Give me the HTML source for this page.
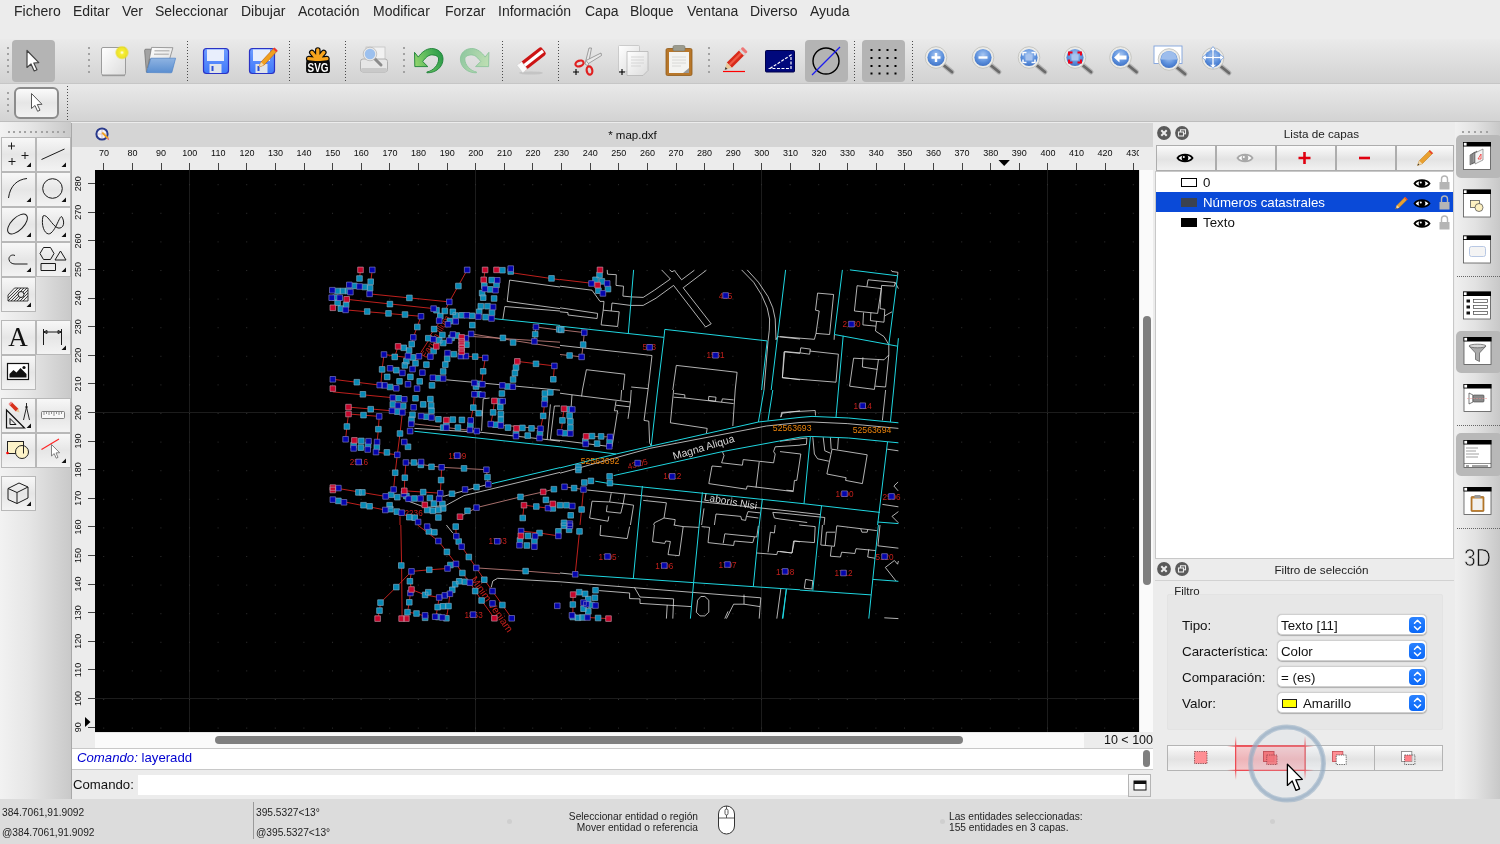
<!DOCTYPE html>
<html lang="es">
<head>
<meta charset="utf-8">
<title>* map.dxf</title>
<style>
html,body{margin:0;padding:0;}
html{background:#ececec;}
body{width:1500px;height:844px;overflow:hidden;position:relative;background:#ececec;will-change:transform;font-family:"Liberation Sans",sans-serif;color:#262626;}
.abs{position:absolute;}
#menubar{left:0;top:0;width:1500px;height:39px;background:#ececec;}
#menubar span{position:absolute;top:3px;font-size:14px;line-height:17px;color:#262626;white-space:nowrap;}
#tb1{left:0;top:39px;width:1500px;height:45px;background:linear-gradient(#eaeaea,#d2d2d2);border-bottom:1px solid #c6c6c6;box-sizing:border-box;}
#tb2{left:0;top:84px;width:1500px;height:38px;background:linear-gradient(#e9e9e9,#d3d3d3);border-bottom:1px solid #bdbdbd;box-sizing:border-box;}
.vsep{position:absolute;width:1px;background:repeating-linear-gradient(#4a4a4a 0,#4a4a4a 1px,transparent 1px,transparent 3px);}
.grip{position:absolute;width:2px;background:repeating-linear-gradient(#a2a2a2 0,#a2a2a2 2px,transparent 2px,transparent 6px);}
.hgrip{position:absolute;height:2px;background:repeating-linear-gradient(90deg,#a2a2a2 0,#a2a2a2 2px,transparent 2px,transparent 5.500px);}
.sel{position:absolute;background:#b4b4b4;border-radius:4px;}
#lefttb{left:0;top:122px;width:71px;height:677px;background:linear-gradient(90deg,#f2f2f2 0%,#e6e6e6 40%,#c9c9c9 100%);}
.tbtn{position:absolute;width:33px;height:33px;box-sizing:border-box;border:1px solid #b9b9b9;background:linear-gradient(#fafafa,#e2e2e2 55%,#f4f4f4);}
.tbtn svg{position:absolute;left:0;top:0;}
#tabbar{left:72px;top:123px;width:1081px;height:24px;background:#d5d5d5;}
#hruler{left:95px;top:147px;width:1044px;height:23px;background:#ececec;overflow:hidden;}
#vruler{left:72px;top:170px;width:23px;height:562px;background:#ececec;overflow:hidden;}
#canvas{left:95px;top:170px;width:1044px;height:562px;background:#000;overflow:hidden;}
#status{left:0;top:799px;width:1500px;height:45px;background:#dcdcdc;}
#status div{position:absolute;font-size:10.200px;line-height:11px;white-space:nowrap;color:#1e1e1e;}
#rightdock{left:1155px;top:123px;width:299px;height:676px;background:#ececec;}
#righttb{left:1455px;top:122px;width:45px;height:677px;background:linear-gradient(90deg,#f0f0f0 0%,#e2e2e2 45%,#c8c8c8 100%);}
</style>
</head>
<body>
<div id="menubar" class="abs">
<span style="left:14px">Fichero</span><span style="left:73px">Editar</span><span style="left:122px">Ver</span><span style="left:155px">Seleccionar</span><span style="left:241px">Dibujar</span><span style="left:298px">Acotación</span><span style="left:373px">Modificar</span><span style="left:445px">Forzar</span><span style="left:498px">Información</span><span style="left:585px">Capa</span><span style="left:630px">Bloque</span><span style="left:687px">Ventana</span><span style="left:750px">Diverso</span><span style="left:810px">Ayuda</span>
</div>
<div id="tb1" class="abs">
<div class="sel" style="left:12px;top:1px;width:43px;height:42px"></div>
<div class="sel" style="left:805px;top:1px;width:43px;height:42px"></div>
<div class="sel" style="left:862px;top:1px;width:43px;height:42px"></div>
<div class="grip" style="left:7px;top:8px;height:26px"></div>
<div class="grip" style="left:88px;top:8px;height:26px"></div>
<div class="grip" style="left:403px;top:8px;height:26px"></div>
<div class="grip" style="left:708px;top:8px;height:26px"></div>
<div class="vsep" style="left:187px;top:2px;height:40px"></div>
<div class="vsep" style="left:289px;top:2px;height:40px"></div>
<div class="vsep" style="left:345px;top:2px;height:40px"></div>
<div class="vsep" style="left:502px;top:2px;height:40px"></div>
<div class="vsep" style="left:558px;top:2px;height:40px"></div>
<div class="vsep" style="left:854px;top:2px;height:40px"></div>
<div class="vsep" style="left:912px;top:2px;height:40px"></div>
<svg class="abs" style="left:0;top:0" width="1500" height="45" viewBox="0 39 1500 45">
<defs>
<linearGradient id="gpaper" x1="0" y1="0" x2="1" y2="1"><stop offset="0" stop-color="#fff"/><stop offset="1" stop-color="#dcdcdc"/></linearGradient>
<radialGradient id="gglow"><stop offset="0" stop-color="#fff"/><stop offset="0.300" stop-color="#f6ee30"/><stop offset="0.750" stop-color="#ebe022" stop-opacity="0.950"/><stop offset="1" stop-color="#e6da20" stop-opacity="0"/></radialGradient>
<linearGradient id="gblue" x1="0" y1="0" x2="0" y2="1"><stop offset="0" stop-color="#8fb4e2"/><stop offset="1" stop-color="#5a8ed0"/></linearGradient>
<radialGradient id="gmag" cx="0.5" cy="0.35" r="0.7"><stop offset="0" stop-color="#a9c8f2"/><stop offset="0.6" stop-color="#5b8fdc"/><stop offset="1" stop-color="#3a6cc0"/></radialGradient>
<linearGradient id="gfloppy" x1="0" y1="0" x2="0" y2="1"><stop offset="0" stop-color="#6f9dff"/><stop offset="1" stop-color="#3f78fa"/></linearGradient>
<g id="mag"><line x1="7" y1="7" x2="16" y2="14.500" stroke="#b4b4b4" stroke-width="5" stroke-linecap="round"/><line x1="8" y1="8" x2="16" y2="14.500" stroke="#6a6a6a" stroke-width="2.800" stroke-linecap="round"/><circle cx="0" cy="0" r="10.800" fill="#ebebe8" stroke="#bdbdb8" stroke-width="0.800"/><circle cx="0" cy="0" r="8.600" fill="url(#gmag)"/></g>
</defs>
<!-- arrow -->
<path d="M27 50.500 L27 67.500 L31 64 L34.200 71 L37 69.800 L33.800 63 L38.800 62.600 Z" fill="#fff" stroke="#444" stroke-width="1.200" stroke-linejoin="round"/>
<!-- new -->
<rect x="101.500" y="47.500" width="24" height="27.500" rx="1.500" fill="url(#gpaper)" stroke="#9c9c9c"/><path d="M102 75.700 h23" stroke="#8a8a8a" stroke-width="0.800"/>
<circle cx="122" cy="52.600" r="7.200" fill="url(#gglow)"/>
<!-- open -->
<path d="M144.600 50.500 q0 -1.300 1.300 -1.300 h5.600 l-3.300 23 h-1.800z" fill="#a2a2a2" stroke="#6a6a6a" stroke-width="0.700"/>
<path d="M151.600 47.400 L172.900 47.700 L169.600 59 L149.600 59 L147.600 68 Z" fill="url(#gpaper)" stroke="#7a7a7a" stroke-width="0.700"/>
<path d="M154.500 50.800 h15 M154 54.300 h14.800" stroke="#bdbdbd" stroke-width="1.500"/>
<path d="M150.900 58.200 H175.600 L171.900 72.300 Q171.700 72.800 171 72.800 L147 72.500 Q146.400 72.400 146.700 71.800 Z" fill="url(#gblue)" stroke="#4f84c8" stroke-width="0.700"/>
<!-- save -->
<g id="floppy"><rect x="203.5" y="48.500" width="25" height="25" rx="3" fill="url(#gfloppy)" stroke="#2a32c4" stroke-width="1.200"/><rect x="207" y="49.5" width="17" height="11.500" fill="#e8eefc"/><rect x="209.500" y="64" width="12" height="9" fill="#dfe4ea"/><rect x="211.500" y="66" width="2" height="5" fill="#2a4fd8"/></g>
<!-- save as -->
<g transform="translate(46,0)"><rect x="203.5" y="48.500" width="25" height="25" rx="3" fill="url(#gfloppy)" stroke="#2a32c4" stroke-width="1.200"/><rect x="207" y="49.5" width="17" height="11.500" fill="#e8eefc"/><rect x="209.500" y="64" width="12" height="9" fill="#dfe4ea"/><rect x="211.500" y="66" width="2" height="5" fill="#2a4fd8"/></g>
<path d="M259 67 l2 -5 l13 -14 l3.200 3 l-13 14z" fill="#f0a020" stroke="#c46a10" stroke-width="0.7"/><path d="M259 67 l2 -5 l3 3z" fill="#f3d9a8"/><path d="M273 49 l1.500 -1.600 l3.200 3 l-1.500 1.600z" fill="#e33"/>
<!-- svg -->
<path d="M317.8 59.6 L317.8 50.0 M317.8 59.6 L323.8 52.4 M317.8 59.6 L311.8 52.4 M317.8 59.6 L326.9 58.6 M317.8 59.6 L308.7 58.6" stroke="#0a0a0a" stroke-width="5.600" stroke-linecap="round" fill="none"/>
<rect x="306.300" y="59" width="23.400" height="14" rx="2.500" fill="#0a0a0a"/>
<path d="M317.8 59.6 L317.8 50.0 M317.8 59.6 L323.8 52.4 M317.8 59.6 L311.8 52.4 M317.8 59.6 L326.9 58.6 M317.8 59.6 L308.7 58.6" stroke="#f7a41d" stroke-width="3.300" stroke-linecap="round" fill="none"/>
<rect x="306.300" y="61.300" width="23.400" height="11.700" rx="2.500" fill="#0a0a0a"/>
<text x="318" y="71.700" font-size="12.300" font-weight="bold" fill="#fff" text-anchor="middle" font-family="Liberation Sans, sans-serif" textLength="21" lengthAdjust="spacingAndGlyphs">SVG</text>
<!-- print preview -->
<rect x="366" y="47" width="19" height="14" fill="#f1f1f1" stroke="#c4c4c4" stroke-width="0.8"/>
<rect x="360.500" y="59" width="27" height="13" rx="2.500" fill="#e6e6e6" stroke="#a9a9a9" stroke-width="0.9"/>
<rect x="361" y="68" width="26" height="4" rx="1.500" fill="#c9c9c9"/>
<line x1="374" y1="58" x2="381" y2="65" stroke="#8b8b8b" stroke-width="3" stroke-linecap="round"/>
<circle cx="370" cy="54" r="6" fill="#9cc0ee" stroke="#e8e8e8" stroke-width="1.600"/><circle cx="370" cy="54" r="6.800" fill="none" stroke="#a8a8a8" stroke-width="0.600"/>
<!-- undo -->
<linearGradient id="gundo" x1="414" y1="66" x2="443" y2="56" gradientUnits="userSpaceOnUse"><stop offset="0" stop-color="#9ad870"/><stop offset="0.500" stop-color="#5cba5c"/><stop offset="1" stop-color="#2a9a48"/></linearGradient>
<linearGradient id="gredo" x1="414" y1="66" x2="443" y2="56" gradientUnits="userSpaceOnUse"><stop offset="0" stop-color="#c0e0b4"/><stop offset="0.500" stop-color="#aad4aa"/><stop offset="1" stop-color="#90c8a0"/></linearGradient>
<path d="M414.500 52.300 L418.300 57.100 C421 53 426 48.500 431.600 48.500 C438 48.500 443 53 443 59 C443 67 436 73 427 72.800 L426.800 72 C433 71 438.600 65 438.600 59 C438.600 56 435 54.900 431.600 54.900 C428 54.900 425 58.500 422.700 61.500 L427.800 66.600 L414.800 66.600 Z" fill="url(#gundo)" stroke="#1b8036" stroke-width="0.900" stroke-linejoin="round"/>
<!-- redo -->
<g transform="translate(903.400,0) scale(-1,1)"><path d="M414.500 52.300 L418.300 57.100 C421 53 426 48.500 431.600 48.500 C438 48.500 443 53 443 59 C443 67 436 73 427 72.800 L426.800 72 C433 71 438.600 65 438.600 59 C438.600 56 435 54.900 431.600 54.900 C428 54.900 425 58.500 422.700 61.500 L427.800 66.600 L414.800 66.600 Z" fill="url(#gredo)" stroke="#8cc49c" stroke-width="0.900" stroke-linejoin="round"/></g>
<!-- eraser -->
<ellipse cx="531" cy="73" rx="12" ry="1.600" fill="#bcbcbc" opacity="0.7"/>
<g transform="translate(532,59.500) rotate(-38)"><rect x="-14" y="-4.800" width="29" height="9.600" rx="2.500" fill="#cc1414"/><rect x="-10" y="-1.600" width="24" height="3.200" fill="#fff"/><rect x="-15.500" y="-4.800" width="6" height="9.600" fill="#fafafa" stroke="#ccc" stroke-width="0.500"/></g>
<!-- scissors -->
<path d="M589 48 l2.500 0 l-3.500 18 l-3 -2z" fill="#e9e9e9" stroke="#8a8a8a" stroke-width="0.8"/>
<path d="M601 53 l0.500 2.500 l-13 8 l-2.500 -3z" fill="#e9e9e9" stroke="#8a8a8a" stroke-width="0.8"/>
<ellipse cx="579.500" cy="63.500" rx="4.200" ry="2.800" fill="none" stroke="#e02020" stroke-width="2.200" transform="rotate(-20 579.500 63.500)"/>
<ellipse cx="589.500" cy="70.500" rx="2.800" ry="4.200" fill="none" stroke="#e02020" stroke-width="2.200" transform="rotate(-10 589.500 70.500)"/>
<path d="M573 72 h6 M576 69 v6" stroke="#000" stroke-width="1.100"/>
<!-- copy -->
<rect x="618.500" y="45.500" width="21" height="26" rx="1" fill="url(#gpaper)" stroke="#c2c2c2" stroke-width="0.8"/>
<path d="M627 51.500 h21 v19 l-5 5 h-16z" fill="url(#gpaper)" stroke="#b5b5b5" stroke-width="0.8"/>
<path d="M631 57 h13 M631 60 h13 M631 63 h13 M631 66 h10" stroke="#cfcfcf" stroke-width="0.8"/>
<path d="M619 72 h6 M622 69 v6" stroke="#000" stroke-width="1.100"/>
<!-- paste -->
<rect x="666" y="48.500" width="26" height="27" rx="1.500" fill="#b8772a" stroke="#8f5a1a" stroke-width="0.8"/>
<rect x="669" y="52" width="20" height="21" fill="#f3f3f1"/>
<path d="M672 57 h14 M672 60 h14 M672 63 h14 M672 66 h9" stroke="#d0d0d0" stroke-width="0.8"/>
<path d="M689 68 v5 h-6z" fill="#9a9a9a"/>
<rect x="673" y="45.500" width="12" height="5.500" rx="1.500" fill="#9b9b8e" stroke="#77776c" stroke-width="0.600"/>
<!-- pencil underline -->
<line x1="723" y1="71.500" x2="745" y2="71.500" stroke="#f00" stroke-width="1.200"/>
<g transform="translate(735,59.500) rotate(-45)"><rect x="-8" y="-3.600" width="19" height="7.200" fill="#d82a1a"/><rect x="-8" y="-1.200" width="19" height="2.200" fill="#ef5a45"/><path d="M-8 -3.600 l-6.500 3.600 l6.500 3.600z" fill="#e8c99a"/><path d="M-12 -1.400 l-2.500 1.400 l2.500 1.400z" fill="#333"/><rect x="9" y="-3.600" width="2.500" height="7.200" fill="#d9d9d9"/><rect x="11.500" y="-3.600" width="3" height="7.200" rx="1.200" fill="#e77"/></g>
<!-- draft -->
<rect x="765.500" y="50.500" width="29" height="21.500" rx="1" fill="#00087c" stroke="#00004a"/>
<path d="M770 68.500 L791 55 V68.500 Z" fill="none" stroke="#fff" stroke-width="1.200" stroke-dasharray="3 1.500"/>
<!-- screen lw -->
<circle cx="826" cy="61" r="13" fill="none" stroke="#000" stroke-width="1.400"/>
<line x1="812" y1="75" x2="840" y2="47" stroke="#1d1df0" stroke-width="1.200"/>
<!-- grid -->
<g fill="#000"><rect x="870.5" y="49" width="2" height="2"/><rect x="878.5" y="49" width="2" height="2"/><rect x="886.5" y="49" width="2" height="2"/><rect x="894.5" y="49" width="2" height="2"/><rect x="870.5" y="57" width="2" height="2"/><rect x="878.5" y="57" width="2" height="2"/><rect x="886.5" y="57" width="2" height="2"/><rect x="894.5" y="57" width="2" height="2"/><rect x="870.5" y="65" width="2" height="2"/><rect x="878.5" y="65" width="2" height="2"/><rect x="886.5" y="65" width="2" height="2"/><rect x="894.5" y="65" width="2" height="2"/><rect x="870.5" y="72.5" width="2" height="2"/><rect x="878.5" y="72.5" width="2" height="2"/><rect x="886.5" y="72.5" width="2" height="2"/><rect x="894.5" y="72.5" width="2" height="2"/></g>
<use href="#mag" x="936" y="57.5"/><path d="M931.500 57.500 h9 M936 53 v9" stroke="#fff" stroke-width="2.400"/>
<use href="#mag" x="983" y="57.5"/><path d="M978.500 57.500 h9" stroke="#fff" stroke-width="2.400"/>
<use href="#mag" x="1029" y="57.5"/><rect x="1025.5" y="54.5" width="7" height="6" fill="#a9c4ee"/><path d="M1023 55.5 v-3 h3.500 M1031.5 52.5 h3.500 v3 M1035 59.5 v3 h-3.500 M1026.5 62.5 h-3.500 v-3" stroke="#fff" stroke-width="1.5" fill="none"/>
<use href="#mag" x="1075" y="57.5"/><rect x="1071.5" y="54.5" width="7" height="6" fill="#a9c4ee"/><path d="M1069 55.5 v-3 h3.500 M1077.5 52.5 h3.500 v3 M1081 59.5 v3 h-3.500 M1072.5 62.5 h-3.500 v-3" stroke="#f00018" stroke-width="1.9" fill="none"/>
<use href="#mag" x="1120.5" y="57.5"/><path d="M1114 57.500 l5.500 -5 v3 h7 v4 h-7 v3z" fill="#fff"/>
<rect x="1154" y="46" width="28" height="17.500" fill="#fff" stroke="#7fa2dc" stroke-width="0.900"/><use href="#mag" x="1169" y="59.5"/><path d="M1160.800 59.500 a8.200 8.200 0 0 1 16.400 0z" fill="#9dbdec"/>
<use href="#mag" x="1213" y="58.5"/><path d="M1213 46.500 l3 4 h-2 v6 h6 v-2 l4 3 l-4 3 v-2 h-6 v6 h2 l-3 4 l-3 -4 h2 v-6 h-6 v2 l-4 -3 l4 -3 v2 h6 v-6 h-2z" fill="#fff" stroke="#6c98dc" stroke-width="0.700"/>
</svg>
</div>
<div id="tb2" class="abs">
<div class="grip" style="left:7px;top:8px;height:20px"></div>
<div class="vsep" style="left:67px;top:2px;height:34px"></div>
<div class="abs" style="left:14px;top:3px;width:45px;height:32px;border:2px solid #8c8c8c;border-radius:6px;box-sizing:border-box;background:linear-gradient(#fbfbfb,#e6e6e6 50%,#f2f2f2)"></div>
<svg class="abs" style="left:14px;top:3px" width="43" height="31" viewBox="0 0 43 31"><path d="M17.500 6.500 L17.500 21.500 L21 18.500 L23.600 24.300 L26 23.200 L23.300 17.500 L28 17.300 Z" fill="#fff" stroke="#555" stroke-width="1" stroke-linejoin="round"/></svg>
</div>
<div id="lefttb" class="abs">
<div class="hgrip" style="left:7.500px;top:9px;width:57px"></div>
<svg class="abs" style="left:0;top:0" width="71" height="677" viewBox="0 122 71 677">
<defs>
<linearGradient id="gbtn" x1="0" y1="0" x2="0" y2="1"><stop offset="0" stop-color="#f8f8f8"/><stop offset="0.5" stop-color="#e6e6e6"/><stop offset="1" stop-color="#f3f3f3"/></linearGradient>
<g id="lb"><rect x="0.5" y="0.5" width="34" height="34" fill="url(#gbtn)" stroke="#b8b8b8"/></g>
<path id="tri" d="M0 0 l4.500 -4.500 v4.500z" fill="#111"/>
</defs>
<use href="#lb" x="1" y="137"/><use href="#lb" x="36" y="137"/>
<use href="#lb" x="1" y="172"/><use href="#lb" x="36" y="172"/>
<use href="#lb" x="1" y="207"/><use href="#lb" x="36" y="207"/>
<use href="#lb" x="1" y="242"/><use href="#lb" x="36" y="242"/>
<use href="#lb" x="1" y="277"/>
<use href="#lb" x="1" y="320"/><use href="#lb" x="36" y="320"/>
<use href="#lb" x="1" y="355"/>
<use href="#lb" x="1" y="398"/><use href="#lb" x="36" y="398"/>
<use href="#lb" x="1" y="433"/><use href="#lb" x="36" y="433"/>
<use href="#lb" x="1" y="476"/>
<!-- corner triangles -->
<use href="#tri" x="26.500" y="167"/><use href="#tri" x="61.500" y="167"/>
<use href="#tri" x="26.500" y="202"/><use href="#tri" x="61.500" y="202"/>
<use href="#tri" x="26.500" y="237"/><use href="#tri" x="61.500" y="237"/>
<use href="#tri" x="26.500" y="272"/><use href="#tri" x="61.500" y="272"/>
<use href="#tri" x="26.500" y="307"/>
<use href="#tri" x="61.500" y="350"/>
<use href="#tri" x="26.500" y="428"/>
<use href="#tri" x="61.500" y="463"/>
<use href="#tri" x="26.500" y="506"/>
<g fill="none" stroke="#1a1a1a" stroke-width="1">
<!-- points -->
<path d="M8 146 h7 M11.500 142.500 v7 M21.500 155.500 h7 M25 152 v7 M8.500 161.500 h7 M12 158 v7"/>
<!-- line -->
<path d="M41.500 159.500 L64.500 149"/>
<!-- arc -->
<path d="M8.500 198 C10 186 17 179.500 27 178.500"/>
<!-- circle -->
<circle cx="52.500" cy="188.500" r="9.800"/>
<!-- ellipse -->
<ellipse cx="17.500" cy="224" rx="12.500" ry="6.200" transform="rotate(-45 17.500 224)"/>
<!-- spline -->
<path d="M43 216 C40.500 227 46 237 51 233 C57 228 60 214 62 217 C65 222 64 229 58 228 C52 226 47 213 43 216"/>
<!-- polyline -->
<path d="M15 255.500 C11.500 254 8.500 256.500 9 259.500 C9.500 262.500 12 264 15 264 L27.500 264"/>
<!-- shapes -->
<path d="M40 253.500 l3.500 -6 h7 l3.500 6 l-3.500 6 h-7z M55 260 l5.500 -9 l5.500 9z M41 263.500 h14.500 v7 h-14.500z"/>
<!-- hatch -->
<path d="M8 295 l6.500 -7 h13.500 v13 h-20z M8 298 l10 -10 M8 301 l13 -13 M11 301 l13 -13 M14 301 l13 -13 M17 301 l11 -11 M20 301 l8 -8 M23 301 l5 -5" stroke-width="0.800"/>
<circle cx="21" cy="294.500" r="3" fill="#e8e8e8"/>
<!-- dimension -->
<path d="M43.500 329 v16 M61.500 329 v16 M43.500 332 h18 M43.500 332 l3.500 -1.500 v3z M61.500 332 l-3.500 -1.500 v3z"/>
<!-- 3d box -->
<path d="M8 488.500 l11 -5.500 l9 4 v11 l-11 5.500 l-9 -4z M8 488.500 l9 4 l11 -5.500 M17 492.500 v11"/>
</g>
<!-- A -->
<text x="18" y="346" font-size="27" text-anchor="middle" font-family="Liberation Serif, serif" fill="#111">A</text>
<!-- image icon -->
<rect x="7.500" y="363.500" width="21" height="16" fill="#fff" stroke="#111" stroke-width="1.200"/>
<path d="M9.500 377.500 v-3.500 l4 -4 l3 2.500 l4 -4.500 l6 6 v3.500z" fill="#111"/><circle cx="24" cy="367.500" r="1.600" fill="#111"/>
<!-- drafting tools -->
<path d="M6.500 410 v18 h18z" fill="none" stroke="#111" stroke-width="1.200"/><path d="M10 418.500 v6 h6z" fill="none" stroke="#111" stroke-width="1"/>
<g transform="translate(15,408) rotate(45)"><rect x="-6" y="-1.800" width="9" height="3.600" fill="#d8301c"/><path d="M3 -1.800 l3.500 1.800 l-3.500 1.800z" fill="#e8c99a"/><rect x="-7.500" y="-1.800" width="2" height="3.600" fill="#e88"/></g>
<path d="M26.500 403 v4 M26.500 407 l-3 13 M26.500 407 l3 13 M25 407 h3" fill="none" stroke="#111" stroke-width="0.900"/>
<!-- ruler -->
<rect x="41.500" y="411.500" width="23" height="7" rx="1" fill="#f8f8f8" stroke="#666" stroke-width="0.800"/>
<path d="M44 412 v3 M46.500 412 v2 M49 412 v3 M51.500 412 v2 M54 412 v4 M56.500 412 v2 M59 412 v3 M61.500 412 v2" stroke="#666" stroke-width="0.700"/>
<!-- block -->
<rect x="7.500" y="441.500" width="16" height="12" fill="#fdf3c8" stroke="#222" stroke-width="1"/>
<circle cx="22" cy="452" r="6.500" fill="#fdf3c8" stroke="#222" stroke-width="1"/>
<path d="M7.500 441.500 h16 v12" fill="none" stroke="#222" stroke-width="1"/>
<circle cx="7.500" cy="453" r="1.300" fill="#f00"/>
<!-- select line -->
<line x1="41.500" y1="449.500" x2="59" y2="439" stroke="#f22" stroke-width="1.100"/>
<path d="M51.500 444.500 v11.500 l2.700 -2.400 l2 4.600 l1.800 -0.800 l-2 -4.500 l3.600 -0.200z" fill="#fff" stroke="#666" stroke-width="0.800" stroke-linejoin="round"/>
</svg>
</div>
<div class="abs" id="lefsep" style="left:70.500px;top:123px;width:1.500px;height:676px;background:#a8a8a8"></div>
<div id="tabbar" class="abs"><div class="abs" style="left:20px;top:4.700px;width:1081px;text-align:center;font-size:11.500px;line-height:15px;color:#111">* map.dxf</div>
<svg class="abs" style="left:23px;top:3px" width="16" height="17" viewBox="0 0 16 17"><circle cx="7" cy="8" r="5.600" fill="#f4f4f8" stroke="#2a3a8c" stroke-width="2"/><path d="M3 8 h8 M7 4 v8" stroke="#c9a0a0" stroke-width="0.600"/><path d="M6.500 7 l5.500 6 l1.500 -1.500 l-5.500 -5.500z" fill="#f0a020"/><path d="M12 13 l2.200 1.200 l-0.800 -2.600z" fill="#e66"/></svg></div>
<div id="hruler" class="abs"><svg width="1044" height="23" viewBox="95 147 1044 23" font-family="Liberation Sans, sans-serif" font-size="9" fill="#0c0c0c">
<text x="103.9" y="155.800" text-anchor="middle">70</text>
<text x="132.5" y="155.800" text-anchor="middle">80</text>
<text x="161.1" y="155.800" text-anchor="middle">90</text>
<text x="189.7" y="155.800" text-anchor="middle">100</text>
<text x="218.3" y="155.800" text-anchor="middle">110</text>
<text x="246.9" y="155.800" text-anchor="middle">120</text>
<text x="275.5" y="155.800" text-anchor="middle">130</text>
<text x="304.1" y="155.800" text-anchor="middle">140</text>
<text x="332.7" y="155.800" text-anchor="middle">150</text>
<text x="361.3" y="155.800" text-anchor="middle">160</text>
<text x="389.9" y="155.800" text-anchor="middle">170</text>
<text x="418.5" y="155.800" text-anchor="middle">180</text>
<text x="447.2" y="155.800" text-anchor="middle">190</text>
<text x="475.8" y="155.800" text-anchor="middle">200</text>
<text x="504.4" y="155.800" text-anchor="middle">210</text>
<text x="533.0" y="155.800" text-anchor="middle">220</text>
<text x="561.6" y="155.800" text-anchor="middle">230</text>
<text x="590.2" y="155.800" text-anchor="middle">240</text>
<text x="618.8" y="155.800" text-anchor="middle">250</text>
<text x="647.4" y="155.800" text-anchor="middle">260</text>
<text x="676.0" y="155.800" text-anchor="middle">270</text>
<text x="704.6" y="155.800" text-anchor="middle">280</text>
<text x="733.2" y="155.800" text-anchor="middle">290</text>
<text x="761.8" y="155.800" text-anchor="middle">300</text>
<text x="790.4" y="155.800" text-anchor="middle">310</text>
<text x="819.0" y="155.800" text-anchor="middle">320</text>
<text x="847.6" y="155.800" text-anchor="middle">330</text>
<text x="876.2" y="155.800" text-anchor="middle">340</text>
<text x="904.8" y="155.800" text-anchor="middle">350</text>
<text x="933.5" y="155.800" text-anchor="middle">360</text>
<text x="962.1" y="155.800" text-anchor="middle">370</text>
<text x="990.7" y="155.800" text-anchor="middle">380</text>
<text x="1019.3" y="155.800" text-anchor="middle">390</text>
<text x="1047.9" y="155.800" text-anchor="middle">400</text>
<text x="1076.5" y="155.800" text-anchor="middle">410</text>
<text x="1105.1" y="155.800" text-anchor="middle">420</text>
<text x="1133.7" y="155.800" text-anchor="middle">430</text>
<path d="M103.5 163 v7 M132.5 163 v7 M161.5 163 v7 M189.5 163 v7 M218.5 163 v7 M246.5 163 v7 M275.5 163 v7 M304.5 163 v7 M332.5 163 v7 M361.5 163 v7 M389.5 163 v7 M418.5 163 v7 M447.5 163 v7 M475.5 163 v7 M504.5 163 v7 M532.5 163 v7 M561.5 163 v7 M590.5 163 v7 M618.5 163 v7 M647.5 163 v7 M676.5 163 v7 M704.5 163 v7 M733.5 163 v7 M761.5 163 v7 M790.5 163 v7 M819.5 163 v7 M847.5 163 v7 M876.5 163 v7 M904.5 163 v7 M933.5 163 v7 M962.5 163 v7 M990.5 163 v7 M1019.5 163 v7 M1047.5 163 v7 M1076.5 163 v7 M1105.5 163 v7 M1133.5 163 v7 " stroke="#444" stroke-width="1" fill="none"/>
<path d="M998.500 160 h11.400 l-5.700 6z" fill="#000"/>
</svg></div>
<div id="vruler" class="abs"><svg width="23" height="562" viewBox="72 170 23 562" font-family="Liberation Sans, sans-serif" font-size="9" fill="#0c0c0c">
<text transform="translate(81.400,727.2) rotate(-90)" text-anchor="middle">90</text>
<text transform="translate(81.400,698.6) rotate(-90)" text-anchor="middle">100</text>
<text transform="translate(81.400,670.0) rotate(-90)" text-anchor="middle">110</text>
<text transform="translate(81.400,641.3) rotate(-90)" text-anchor="middle">120</text>
<text transform="translate(81.400,612.7) rotate(-90)" text-anchor="middle">130</text>
<text transform="translate(81.400,584.1) rotate(-90)" text-anchor="middle">140</text>
<text transform="translate(81.400,555.5) rotate(-90)" text-anchor="middle">150</text>
<text transform="translate(81.400,526.9) rotate(-90)" text-anchor="middle">160</text>
<text transform="translate(81.400,498.3) rotate(-90)" text-anchor="middle">170</text>
<text transform="translate(81.400,469.7) rotate(-90)" text-anchor="middle">180</text>
<text transform="translate(81.400,441.1) rotate(-90)" text-anchor="middle">190</text>
<text transform="translate(81.400,412.5) rotate(-90)" text-anchor="middle">200</text>
<text transform="translate(81.400,383.9) rotate(-90)" text-anchor="middle">210</text>
<text transform="translate(81.400,355.3) rotate(-90)" text-anchor="middle">220</text>
<text transform="translate(81.400,326.7) rotate(-90)" text-anchor="middle">230</text>
<text transform="translate(81.400,298.1) rotate(-90)" text-anchor="middle">240</text>
<text transform="translate(81.400,269.5) rotate(-90)" text-anchor="middle">250</text>
<text transform="translate(81.400,240.9) rotate(-90)" text-anchor="middle">260</text>
<text transform="translate(81.400,212.3) rotate(-90)" text-anchor="middle">270</text>
<text transform="translate(81.400,183.7) rotate(-90)" text-anchor="middle">280</text>
<path d="M88 727.5 h7 M88 698.5 h7 M88 669.5 h7 M88 641.5 h7 M88 612.5 h7 M88 584.5 h7 M88 555.5 h7 M88 526.5 h7 M88 498.5 h7 M88 469.5 h7 M88 441.5 h7 M88 412.5 h7 M88 383.5 h7 M88 355.5 h7 M88 326.5 h7 M88 298.5 h7 M88 269.5 h7 M88 240.5 h7 M88 212.5 h7 M88 183.5 h7 " stroke="#444" stroke-width="1" fill="none"/>
<path d="M85 717 v10 l5.500 -5z" fill="#000"/>
</svg></div>
<div class="abs" style="left:1139px;top:170px;width:14px;height:562px;background:#fafafa;border-left:1px solid #e6e6e6;box-sizing:border-box"></div>
<div class="abs" style="left:1143px;top:316px;width:8px;height:269px;border-radius:4px;background:#7f7f7f"></div>
<div class="abs" style="left:72px;top:732px;width:1081px;height:16px;background:#fafafa;border-top:1px solid #e6e6e6;box-sizing:border-box"></div>
<div class="abs" style="left:72px;top:732px;width:23px;height:16px;background:#ececec"></div>
<div class="abs" style="left:215px;top:736px;width:748px;height:8px;border-radius:4px;background:#7f7f7f"></div>
<div class="abs" style="left:1084px;top:732px;width:69px;height:16px;background:#ececec;font-size:12.500px;line-height:17px;text-align:right;color:#111">10 &lt; 100</div>
<div class="abs" style="left:72px;top:748px;width:1081px;height:22px;background:#fff;border-top:1px solid #c8c8c8;border-bottom:1px solid #c8c8c8;box-sizing:border-box"></div>
<div class="abs" style="left:77px;top:750px;font-size:13.200px;line-height:16px;color:#0000d0;white-space:nowrap"><i>Comando:</i> layeradd</div>
<div class="abs" style="left:1143px;top:750px;width:7px;height:17px;border-radius:3.500px;background:#7f7f7f"></div>
<div class="abs" style="left:73px;top:777px;font-size:13.200px;line-height:16px;color:#111">Comando:</div>
<div class="abs" style="left:138px;top:775px;width:990px;height:20px;background:#fff"></div>
<div class="abs" style="left:1128px;top:774px;width:23px;height:23px;box-sizing:border-box;border:1px solid #b5b5b5;background:linear-gradient(#fafafa,#e6e6e6)"><svg width="21" height="21" viewBox="0 0 21 21" style="position:absolute;left:0;top:0"><rect x="5" y="6" width="12" height="9" fill="#fff" stroke="#111" stroke-width="1"/><rect x="5" y="6" width="12" height="3" fill="#111"/></svg></div>
<div id="canvas" class="abs"><svg width="1044" height="562" viewBox="95 170 1044 562" font-family="Liberation Sans, sans-serif">
<path d="M189.5 170 V732 M475.5 170 V732 M761.5 170 V732 M1047.5 170 V732 M95 698.5 H1139 M95 412.5 H1139 " stroke="#1c1c1c" stroke-width="1" fill="none"/>
<defs><pattern id="gd" x="189.00" y="413.00" width="28.6" height="28.6" patternUnits="userSpaceOnUse"><rect x="0" y="0" width="1" height="1" fill="#303030"/></pattern></defs>
<rect x="95" y="170" width="1044" height="562" fill="url(#gd)"/>
<path d="M509.6 280.1 L560.0 287.0 M509.6 280.1 L507.2 301.4 L560.0 308.6 M504.8 306.5 L560.0 311.0 M504.8 306.5 L502.9 319.0 M446.4 379.8 L560.0 390.2 M414.4 428.4 L481.6 432.4 L547.2 439.6 L560.0 441.2 M483.2 398.8 L481.6 430.8 M483.2 398.8 L489.6 398.0 M550.4 404.4 L547.2 439.6 M554.4 406.0 L550.4 439.6 L560.0 440.4 M560.0 406.0 L554.4 406.0 M406.4 500.4 L425.6 507.6 L446.4 505.2 L464.0 495.6 L560.0 472.4 M443.2 496.4 L488.0 484.4 M491.2 587.4 L492.8 581.0 L497.6 578.3 L560.0 581.8 M446.4 525.0 L452.8 533.0 M560.0 286.2 L592.0 290.2 L600.0 301.4 L604.0 301.4 L603.2 310.2 M607.2 269.9 L607.5 274.2 L616.3 274.7 L616.0 285.4 L623.5 286.2 L622.9 296.1 L631.2 296.9 L643.2 297.4 L654.4 290.2 L670.4 279.0 L661.6 269.9 M612.0 303.0 L630.4 305.4 L643.2 305.4 L656.0 298.2 L673.6 285.4 L705.6 327.0 L711.2 323.8 L683.2 287.8 L706.4 270.2 M669.6 269.9 L672.0 271.8 L674.4 270.5 L681.6 279.8 L694.4 270.2 M612.0 303.0 L611.2 311.0 M603.2 310.2 L619.2 311.8 L617.6 326.5 L601.1 324.9 L603.2 310.2 M560.0 307.8 L597.6 313.4 L597.1 318.5 L568.0 315.0 L568.0 312.6 L560.0 311.8 M741.6 269.9 L753.6 282.2 L761.6 295.0 L767.2 307.8 L769.6 319.0 L769.3 330.2 L768.0 341.4 L764.0 390.0 M747.2 269.9 L758.4 282.2 L768.0 296.6 L772.8 307.8 L775.2 319.0 L776.0 339.8 M776.0 339.8 L777.6 336.6 L800.0 339.0 M560.0 345.4 L652.0 355.5 L648.0 390.0 M586.4 369.7 L624.8 374.2 L623.2 390.0 M586.4 369.7 L582.4 390.0 M676.3 365.4 L737.1 372.3 L735.2 390.0 M676.3 365.4 L672.8 390.0 M631.2 387.0 L648.0 388.6 M800.0 353.4 L784.0 351.8 L782.4 377.4 L800.0 379.8 M560.0 393.2 L572.0 394.8 L571.2 406.0 M572.0 394.8 L630.4 402.0 M582.4 390.0 L581.6 396.4 M621.6 390.0 L620.8 400.4 M631.2 390.0 L630.4 402.0 L628.0 418.8 M616.0 401.2 L614.4 410.8 L617.6 410.8 L612.0 446.8 M616.0 405.2 L629.6 406.8 M560.0 440.4 L612.0 446.8 M648.0 390.0 L644.0 420.4 L648.8 421.2 L649.6 442.8 L651.2 446.0 M560.0 473.2 L649.6 448.4 L766.4 426.0 L800.0 422.5 M587.2 490.0 L780.0 510.0 M673.6 390.0 L670.4 422.8 L707.2 428.4 L706.4 433.2 M673.6 397.2 L684.8 398.0 L684.8 394.8 L674.4 393.5 M684.8 398.0 L733.6 403.6 M708.8 396.4 L716.0 397.2 L715.5 401.2 L708.5 400.4 L708.8 396.4 M721.6 402.0 L722.4 398.8 L733.6 399.9 M735.2 390.0 L732.8 426.0 M780.8 417.2 L782.4 413.2 L800.0 410.8 M722.4 451.6 L724.0 455.6 L721.6 462.8 L742.4 465.2 L743.2 459.6 L773.6 462.8 L775.2 454.0 L773.6 451.6 L775.2 446.8 L800.0 445.2 M721.6 466.8 L712.0 466.0 L708.8 483.6 L746.4 489.2 L747.2 486.0 L793.6 491.6 M759.2 462.0 L756.0 487.6 M611.2 493.2 L609.6 502.0 L592.0 501.2 L589.6 518.0 L608.0 521.2 L608.8 516.4 M624.8 494.0 L623.2 503.6 L609.6 502.0 M623.2 503.6 L620.8 513.2 L606.4 511.6 L607.2 505.2 M630.4 525.0 L633.6 505.2 L623.2 503.6 M643.2 500.4 L666.4 502.8 L664.0 518.0 L654.4 522.8 L653.6 525.0 M664.0 518.0 L675.2 519.6 L674.4 525.0 M704.0 508.4 L701.6 525.0 M716.0 514.0 L740.8 516.4 L741.6 519.6 L745.6 520.4 L746.4 516.4 L758.4 518.0 M716.0 514.0 L714.4 525.0 M748.0 511.6 L746.4 516.4 M748.0 511.6 L760.0 512.9 M772.8 512.4 L774.4 518.0 L780.0 519.0 M772.8 512.4 L780.0 512.9 M560.0 573.0 L572.8 574.3 M560.0 581.8 L760.8 597.8 L759.2 618.6 M599.2 590.6 L629.6 593.0 L629.6 598.6 L640.0 598.9 L640.0 603.4 L691.2 606.6 M634.4 587.4 L640.0 597.0 L673.6 598.9 L672.8 618.6 M667.2 605.0 L666.4 618.6 M744.0 594.6 L744.0 604.2 L760.0 606.6 M744.0 604.2 L733.6 604.2 L726.4 618.6 M728.0 611.4 L724.8 618.6 M780.8 589.0 L776.8 618.6 M600.8 525.0 L600.0 535.4 L627.2 538.6 L629.6 526.6 M654.4 525.0 L652.5 541.8 L664.8 543.4 L665.6 541.0 L670.4 541.5 L668.0 554.6 L679.2 555.7 L683.2 526.6 L673.6 525.0 M683.2 526.6 L699.2 527.4 M701.6 526.6 L709.6 527.4 L708.0 542.6 L733.6 545.5 L734.4 541.0 L752.8 542.6 L754.4 537.0 M724.8 533.8 L756.8 537.0 L758.4 525.8 M724.8 533.8 L723.2 543.4 M768.0 552.2 L770.4 532.2 L774.4 533.0 L775.2 525.0 M756.8 553.0 L776.8 554.6 L777.6 551.4 L792.0 553.0 L794.4 541.0 L800.0 541.8 M697.6 600.2 L700.8 596.5 L704.8 596.5 L708.8 600.2 L708.8 612.2 L704.8 615.9 L700.0 615.9 L696.3 612.2 L697.6 600.2 M817.6 293.1 L833.6 294.5 L829.6 334.5 L816.0 333.4 L819.2 311.0 L815.5 310.2 L817.6 293.1 M780.0 336.6 L814.4 339.3 L816.0 333.4 M834.4 334.5 L834.1 339.8 M866.9 286.7 L868.0 279.8 L895.2 282.5 L894.4 286.2 L881.6 285.4 L880.0 308.6 L884.8 309.4 L884.0 322.2 L870.4 320.6 L870.9 312.6 M857.1 285.7 L881.3 288.6 L877.6 313.4 L854.4 311.0 L857.1 285.7 M863.5 312.6 L862.9 324.9 L876.0 326.2 L876.5 321.4 M876.0 326.2 L875.5 331.0 L884.0 336.6 L888.8 344.6 L888.8 355.0 L884.0 359.8 M884.8 315.8 L892.0 311.8 M891.2 270.2 L892.0 271.5 L897.9 272.3 L897.6 275.8 M895.2 282.5 L898.4 288.6 M800.8 347.8 L810.4 349.1 L809.6 354.2 L800.0 352.9 L800.8 347.8 M784.8 351.5 L800.0 352.9 M809.6 351.0 L838.4 354.2 L836.0 382.2 L782.4 377.9 L784.8 351.5 M884.0 359.8 L853.6 358.2 L849.6 386.2 L874.4 389.4 L878.4 359.8 M862.9 357.4 L862.4 367.0 L877.3 369.4 M888.8 355.0 L885.6 387.0 L875.2 386.2 M885.6 390.0 L882.4 420.4 M800.0 422.5 L812.0 422.0 L847.2 423.6 L898.4 428.4 M780.8 417.2 L781.6 412.4 L815.2 410.5 L815.5 415.6 M780.0 441.2 L806.9 438.0 L806.4 444.4 L800.0 445.0 M780.0 451.6 L800.8 454.0 L796.8 480.4 L794.4 480.4 L793.3 490.8 L786.4 490.2 M812.8 437.2 L814.4 454.0 L817.6 458.8 L828.8 461.2 M823.2 437.2 L824.8 450.8 L830.4 453.2 M830.4 437.2 L831.2 449.2 M838.4 437.7 L837.6 449.2 M832.0 449.2 L867.2 454.8 L862.4 483.6 L845.6 480.4 L846.1 477.7 L826.9 474.0 L832.0 449.2 M887.2 449.2 L898.4 450.8 M898.1 482.0 L893.9 486.0 L898.1 490.8 M882.4 504.4 L898.4 506.8 M898.4 511.6 L892.0 516.4 L898.4 522.8 M780.0 510.0 L820.0 514.5 M780.0 512.9 L824.8 517.5 L824.0 525.0 M780.0 519.0 L807.2 522.5 M799.2 525.0 L815.2 526.6 L814.4 542.6 L793.6 541.0 L792.0 553.0 L780.0 551.4 M822.4 525.0 L820.8 545.0 L834.4 546.3 L836.8 525.8 L876.8 530.6 M826.4 532.2 L835.2 532.2 M826.4 532.2 L825.3 545.0 M860.8 529.0 L861.9 532.2 L867.2 532.2 L867.7 529.8 M831.5 546.6 L830.4 556.2 L840.5 557.0 L841.6 552.2 L854.9 553.5 L856.0 548.7 L876.0 550.6 M868.8 549.3 L867.7 557.0 L875.2 558.3 M880.0 525.0 L877.9 545.8 L898.4 548.2 M805.6 579.4 L812.8 580.7 L812.0 589.0 L804.3 588.2 L805.6 579.4 M894.4 560.5 L885.3 567.4 L896.0 581.0 M894.4 560.5 L897.6 564.2 L898.4 561.0 M884.3 617.8 L898.4 618.6" fill="none" stroke="#dedede" stroke-width="0.8" stroke-linejoin="round"/>
<path d="M494.4 318.7 L560.0 325.4 M414.4 431.3 L560.0 446.8 M492.0 483.6 L560.0 467.6 M633.6 269.9 L628.3 333.7 M560.0 326.2 L664.0 337.4 M664.8 329.4 L767.2 340.9 M664.8 329.4 L664.0 337.4 L657.6 390.0 M785.6 269.9 L771.2 390.0 M767.2 340.9 L761.6 390.0 M657.6 390.0 L651.2 446.0 M560.0 446.8 L616.0 454.0 M560.0 467.9 L616.0 454.0 L758.4 422.0 L800.0 417.4 M613.6 475.6 L722.4 451.6 L800.0 437.2 M595.2 481.2 L609.6 483.6 L800.0 503.3 M764.0 390.0 L758.4 422.0 M772.8 390.0 L768.0 420.4 M642.4 486.0 L638.4 525.0 M702.4 492.4 L699.2 525.0 M762.4 498.8 L759.2 525.0 M579.2 574.9 L800.0 589.8 M638.4 525.0 L633.3 578.6 M699.2 525.0 L693.6 582.6 L690.4 618.6 M759.2 525.0 L753.3 586.6 M786.4 589.0 L782.4 618.6 M842.4 269.9 L834.4 334.5 M849.9 269.9 L897.6 275.8 L888.8 344.6 M834.4 334.5 L897.6 346.2 M843.2 335.8 L838.4 390.0 M898.4 338.2 L893.6 390.0 M838.4 390.0 L836.0 417.2 M893.6 390.0 L890.4 422.0 M800.0 417.4 L812.0 416.4 L848.8 418.0 L898.4 422.8 M800.0 437.2 L810.4 436.4 L848.8 438.0 L898.4 442.8 M810.4 436.4 L804.0 503.9 M887.5 442.0 L877.6 525.0 M800.0 503.3 L880.0 512.4 M821.6 505.5 L819.2 525.0 M877.6 522.0 L898.4 523.6 M819.2 525.0 L812.8 590.6 M878.4 525.0 L871.2 594.9 L868.8 618.6 M800.0 590.1 L871.2 594.9 M872.8 579.4 L898.4 581.3 M786.4 589.0 L782.9 618.6" fill="none" stroke="#1fd6e0" stroke-width="1.0" stroke-linejoin="round"/>
<path d="M471.2 333.9 L560.0 347.8 M473.6 336.6 L560.0 342.2 M536.0 327.0 L560.0 330.2 M536.0 327.0 L534.4 341.4 M405.9 462.5 L441.6 467.3 L486.4 469.7 M414.4 423.9 L476.8 431.1 M490.7 424.1 L540.5 428.7 M476.5 507.6 L520.5 496.9 L543.2 491.9 L553.9 489.2 M460.0 516.7 L476.5 507.6 M486.4 469.7 L488.3 484.4 M476.3 567.9 L525.6 571.1 L560.0 573.8 M561.3 329.9 L584.3 332.6 L583.2 344.6 L581.6 356.9 L569.6 355.5 L560.0 354.5 M586.1 436.4 L610.1 436.9 M564.5 486.8 L583.5 489.5" fill="none" stroke="#d08a86" stroke-width="0.8" stroke-linejoin="round"/>
<path d="M372.3 269.9 L370.7 281.7 M360.5 269.9 L359.5 278.5 M369.6 293.9 L449.3 301.9 M346.7 299.3 L433.6 308.6 M345.6 309.9 L421.0 316.3 M467.2 269.9 L449.3 301.9 L446.4 307.8 M421.0 316.3 L413.3 337.4 L411.7 344.1 M510.7 272.6 L560.0 279.8 M485.1 269.9 L483.7 279.8 M432.0 335.0 L420.8 352.6 M438.4 323.8 L430.4 335.0 M384.0 354.5 L382.1 369.4 L380.8 385.1 M398.1 346.4 L394.7 356.9 M384.0 354.5 L418.9 359.0 M332.8 379.3 L379.7 385.1 M485.3 357.9 L483.2 371.3 L481.6 384.6 M465.9 356.1 L485.3 357.9 M517.3 361.4 L554.4 365.9 M517.3 361.4 L513.1 379.5 M554.4 365.9 L553.3 379.3 M332.8 391.9 L392.8 397.7 M348.5 407.1 L392.0 410.8 M348.5 414.0 L379.2 416.4 M348.5 414.0 L346.9 426.5 L345.6 439.3 M379.2 416.4 L378.4 429.2 L377.1 442.0 M402.4 412.4 L400.0 433.5 L397.3 454.8 L395.2 472.7 L393.6 489.5 M332.8 487.6 L385.6 496.4 M332.8 499.6 L385.3 510.0 M405.9 462.5 L404.8 477.7 L404.3 490.8 M404.3 490.8 L440.3 493.2 M441.6 467.3 L441.1 480.1 L440.3 493.2 M400.0 516.4 L400.0 525.0 M473.3 407.6 L470.7 420.4 M474.4 394.3 L473.3 407.6 M494.4 400.9 L493.1 412.4 L490.7 424.1 M544.5 404.1 L543.2 415.9 L540.5 428.7 M524.0 505.2 L522.7 518.0 M524.0 505.2 L548.0 508.1 M377.1 442.0 L376.0 452.1 L397.3 454.8 M400.8 525.0 L401.6 565.5 L402.1 618.6 M417.6 525.0 L438.4 541.0 L446.9 551.9 L456.0 563.9 L462.4 573.0 L469.9 582.6 L481.6 600.5 L494.4 618.3 M455.7 526.6 L456.3 536.2 L461.6 546.6 L468.8 557.0 L476.3 567.9 L484.3 579.7 L492.5 591.1 L502.4 605.0 L511.7 618.3 M411.5 571.4 L429.3 569.8 L447.5 568.5 M411.5 571.4 L396.3 587.1 L380.5 602.6 M411.5 571.4 L409.9 581.3 L411.5 589.5 M411.5 589.5 L425.1 594.9 L439.2 597.5 M410.4 593.0 L409.3 602.3 L407.5 612.2 M407.5 612.2 L416.5 613.5 L425.1 616.2 M439.2 597.5 L437.6 607.1 L436.0 616.7 M449.9 593.8 L448.5 606.1 L446.4 618.3 M435.2 616.7 L446.4 618.3 M380.5 602.6 L379.5 610.6 L377.6 618.6 M521.1 531.1 L539.5 533.0 L558.4 535.9 M560.0 279.5 L589.6 283.0 M583.5 489.5 L581.6 509.5 L580.0 525.0 M564.0 408.7 L561.6 428.4 M579.5 531.4 L575.2 574.3 M587.5 617.5 L608.5 618.6 M573.1 594.6 L572.8 617.0" fill="none" stroke="#d42420" stroke-width="0.9" stroke-linejoin="round"/>
<text x="435.5" y="339.8" font-size="9.0" fill="#c4201c" text-anchor="middle" transform="rotate(-59 435.5 336.6)">Earum illum</text>
<text x="358.9" y="465.0" font-size="8.2" fill="#c4201c" text-anchor="middle">2516</text>
<text x="457.3" y="458.6" font-size="8.2" fill="#c4201c" text-anchor="middle">1599</text>
<text x="413.6" y="516.2" font-size="8.2" fill="#c4201c" text-anchor="middle">2236</text>
<text x="473.6" y="617.6" font-size="8.2" fill="#c4201c" text-anchor="middle">1863</text>
<text x="497.6" y="544.3" font-size="8.2" fill="#c4201c" text-anchor="middle">1703</text>
<text x="492.0" y="607.9" font-size="10.4" fill="#c4201c" text-anchor="middle" transform="rotate(55 492.0 604.2)">Minim Veniam</text>
<text x="725.6" y="298.8" font-size="8.2" fill="#c4201c" text-anchor="middle">485</text>
<text x="649.3" y="350.4" font-size="8.2" fill="#c4201c" text-anchor="middle">583</text>
<text x="715.5" y="358.4" font-size="8.2" fill="#c4201c" text-anchor="middle">1581</text>
<text x="703.5" y="450.9" font-size="10.5" fill="#d8d8d8" text-anchor="middle" transform="rotate(-16.5 703.5 447.1)">Magna Aliqua</text>
<text x="730.6" y="504.9" font-size="10.3" fill="#d8d8d8" text-anchor="middle" transform="rotate(10 730.6 501.2)">Laboris Nisi</text>
<text x="600.0" y="463.5" font-size="8.7" fill="#e8820c" text-anchor="middle">52563692</text>
<text x="792.2" y="431.2" font-size="8.7" fill="#e8820c" text-anchor="middle">52563693</text>
<text x="637.6" y="466.9" font-size="8.2" fill="#c4201c" text-anchor="middle" transform="rotate(-15 637.6 463.9)">43.05</text>
<text x="672.3" y="479.4" font-size="8.2" fill="#c4201c" text-anchor="middle">1612</text>
<text x="607.5" y="560.0" font-size="8.2" fill="#c4201c" text-anchor="middle">1705</text>
<text x="664.3" y="568.8" font-size="8.2" fill="#c4201c" text-anchor="middle">1706</text>
<text x="727.5" y="568.0" font-size="8.2" fill="#c4201c" text-anchor="middle">1707</text>
<text x="785.1" y="574.7" font-size="8.2" fill="#c4201c" text-anchor="middle">1708</text>
<text x="851.5" y="327.4" font-size="8.2" fill="#c4201c" text-anchor="middle">2130</text>
<text x="872.0" y="432.7" font-size="8.7" fill="#e8820c" text-anchor="middle">52563694</text>
<text x="862.7" y="409.0" font-size="8.2" fill="#c4201c" text-anchor="middle">1614</text>
<text x="844.5" y="497.0" font-size="8.2" fill="#c4201c" text-anchor="middle">1600</text>
<text x="891.5" y="499.8" font-size="8.2" fill="#c4201c" text-anchor="middle">2506</text>
<text x="843.5" y="576.3" font-size="8.2" fill="#c4201c" text-anchor="middle">1712</text>
<text x="884.5" y="560.0" font-size="8.2" fill="#c4201c" text-anchor="middle">5120</text>
<path d="M356.7 275.7h5.6v5.6h-5.6zM367.9 278.9h5.6v5.6h-5.6zM351.6 283.1h5.6v5.6h-5.6zM362.0 284.2h5.6v5.6h-5.6zM367.3 285.3h5.6v5.6h-5.6zM334.8 288.2h5.6v5.6h-5.6zM340.1 288.2h5.6v5.6h-5.6zM345.2 288.2h5.6v5.6h-5.6zM332.7 294.9h5.6v5.6h-5.6zM334.8 299.9h5.6v5.6h-5.6zM343.3 302.1h5.6v5.6h-5.6zM338.0 305.8h5.6v5.6h-5.6zM406.6 295.1h5.6v5.6h-5.6zM387.1 301.3h5.6v5.6h-5.6zM364.4 308.7h5.6v5.6h-5.6zM385.7 310.6h5.6v5.6h-5.6zM402.2 311.7h5.6v5.6h-5.6zM455.6 283.2h5.6v5.6h-5.6zM499.6 267.4h5.6v5.6h-5.6zM507.9 268.7h5.6v5.6h-5.6zM548.7 275.6h5.6v5.6h-5.6zM488.9 277.3h5.6v5.6h-5.6zM493.7 282.1h5.6v5.6h-5.6zM481.5 282.9h5.6v5.6h-5.6zM487.3 286.6h5.6v5.6h-5.6zM479.3 290.3h5.6v5.6h-5.6zM480.4 294.9h5.6v5.6h-5.6zM491.3 295.7h5.6v5.6h-5.6zM478.0 303.4h5.6v5.6h-5.6zM484.7 303.4h5.6v5.6h-5.6zM476.4 309.0h5.6v5.6h-5.6zM489.2 309.8h5.6v5.6h-5.6zM482.8 314.3h5.6v5.6h-5.6zM433.7 307.4h5.6v5.6h-5.6zM442.0 308.2h5.6v5.6h-5.6zM450.0 309.0h5.6v5.6h-5.6zM437.5 313.3h5.6v5.6h-5.6zM452.9 312.7h5.6v5.6h-5.6zM459.1 312.5h5.6v5.6h-5.6zM469.2 313.0h5.6v5.6h-5.6zM447.1 318.3h5.6v5.6h-5.6zM469.5 322.3h5.6v5.6h-5.6zM431.3 326.3h5.6v5.6h-5.6zM414.5 324.2h5.6v5.6h-5.6zM439.6 332.2h5.6v5.6h-5.6zM454.0 332.7h5.6v5.6h-5.6zM448.7 335.1h5.6v5.6h-5.6zM425.5 335.4h5.6v5.6h-5.6zM436.4 337.5h5.6v5.6h-5.6zM440.4 340.2h5.6v5.6h-5.6zM408.9 341.3h5.6v5.6h-5.6zM400.9 345.0h5.6v5.6h-5.6zM406.3 347.7h5.6v5.6h-5.6zM430.8 348.2h5.6v5.6h-5.6zM391.9 354.1h5.6v5.6h-5.6zM410.0 354.6h5.6v5.6h-5.6zM403.6 358.3h5.6v5.6h-5.6zM412.7 360.5h5.6v5.6h-5.6zM423.6 361.8h5.6v5.6h-5.6zM402.0 362.6h5.6v5.6h-5.6zM379.3 366.6h5.6v5.6h-5.6zM393.5 367.4h5.6v5.6h-5.6zM384.4 374.1h5.6v5.6h-5.6zM407.6 374.1h5.6v5.6h-5.6zM396.7 378.6h5.6v5.6h-5.6zM416.9 378.6h5.6v5.6h-5.6zM435.1 375.4h5.6v5.6h-5.6zM451.1 351.4h5.6v5.6h-5.6zM444.4 355.9h5.6v5.6h-5.6zM442.5 361.8h5.6v5.6h-5.6zM440.4 368.7h5.6v5.6h-5.6zM429.2 382.6h5.6v5.6h-5.6zM387.3 384.2h5.6v5.6h-5.6zM354.0 379.4h5.6v5.6h-5.6zM472.4 353.8h5.6v5.6h-5.6zM480.4 368.5h5.6v5.6h-5.6zM463.6 341.8h5.6v5.6h-5.6zM500.1 335.1h5.6v5.6h-5.6zM510.3 339.7h5.6v5.6h-5.6zM532.4 331.4h5.6v5.6h-5.6zM556.4 326.6h5.6v5.6h-5.6zM533.2 361.0h5.6v5.6h-5.6zM513.2 364.7h5.6v5.6h-5.6zM512.1 370.3h5.6v5.6h-5.6zM510.3 376.7h5.6v5.6h-5.6zM550.5 376.5h5.6v5.6h-5.6zM504.7 383.7h5.6v5.6h-5.6zM475.6 381.0h5.6v5.6h-5.6zM473.2 383.7h5.6v5.6h-5.6zM360.1 391.5h5.6v5.6h-5.6zM395.9 395.5h5.6v5.6h-5.6zM412.7 395.5h5.6v5.6h-5.6zM427.6 396.3h5.6v5.6h-5.6zM390.0 401.6h5.6v5.6h-5.6zM400.4 403.2h5.6v5.6h-5.6zM420.4 401.6h5.6v5.6h-5.6zM428.4 402.7h5.6v5.6h-5.6zM394.5 408.8h5.6v5.6h-5.6zM409.7 412.0h5.6v5.6h-5.6zM428.7 408.0h5.6v5.6h-5.6zM367.9 406.4h5.6v5.6h-5.6zM360.7 412.3h5.6v5.6h-5.6zM423.6 413.9h5.6v5.6h-5.6zM435.6 416.5h5.6v5.6h-5.6zM408.7 416.8h5.6v5.6h-5.6zM344.1 423.7h5.6v5.6h-5.6zM375.6 426.4h5.6v5.6h-5.6zM397.2 430.7h5.6v5.6h-5.6zM358.5 438.1h5.6v5.6h-5.6zM350.8 442.4h5.6v5.6h-5.6zM358.0 444.8h5.6v5.6h-5.6zM365.2 442.4h5.6v5.6h-5.6zM374.0 444.5h5.6v5.6h-5.6zM405.2 444.0h5.6v5.6h-5.6zM384.1 449.6h5.6v5.6h-5.6zM411.1 459.7h5.6v5.6h-5.6zM418.0 462.1h5.6v5.6h-5.6zM428.7 464.0h5.6v5.6h-5.6zM461.2 465.6h5.6v5.6h-5.6zM392.4 469.9h5.6v5.6h-5.6zM402.0 474.9h5.6v5.6h-5.6zM438.3 477.3h5.6v5.6h-5.6zM484.7 474.4h5.6v5.6h-5.6zM473.7 484.3h5.6v5.6h-5.6zM449.2 490.9h5.6v5.6h-5.6zM355.6 489.6h5.6v5.6h-5.6zM359.6 489.6h5.6v5.6h-5.6zM420.4 489.3h5.6v5.6h-5.6zM388.4 492.0h5.6v5.6h-5.6zM394.5 494.4h5.6v5.6h-5.6zM403.6 493.3h5.6v5.6h-5.6zM411.6 495.7h5.6v5.6h-5.6zM427.1 495.2h5.6v5.6h-5.6zM335.6 498.1h5.6v5.6h-5.6zM360.7 502.4h5.6v5.6h-5.6zM366.8 503.5h5.6v5.6h-5.6zM431.1 500.8h5.6v5.6h-5.6zM439.6 501.1h5.6v5.6h-5.6zM386.8 502.4h5.6v5.6h-5.6zM387.6 506.4h5.6v5.6h-5.6zM394.0 508.8h5.6v5.6h-5.6zM424.4 507.2h5.6v5.6h-5.6zM430.0 508.0h5.6v5.6h-5.6zM435.6 507.2h5.6v5.6h-5.6zM440.4 505.6h5.6v5.6h-5.6zM406.5 514.4h5.6v5.6h-5.6zM411.9 514.9h5.6v5.6h-5.6zM435.6 514.7h5.6v5.6h-5.6zM464.7 508.0h5.6v5.6h-5.6zM475.6 391.5h5.6v5.6h-5.6zM499.1 390.7h5.6v5.6h-5.6zM497.2 398.4h5.6v5.6h-5.6zM470.5 404.8h5.6v5.6h-5.6zM497.5 404.3h5.6v5.6h-5.6zM475.9 410.4h5.6v5.6h-5.6zM490.3 409.6h5.6v5.6h-5.6zM498.0 411.2h5.6v5.6h-5.6zM498.0 416.8h5.6v5.6h-5.6zM450.0 416.8h5.6v5.6h-5.6zM459.1 417.1h5.6v5.6h-5.6zM467.6 422.4h5.6v5.6h-5.6zM443.6 422.1h5.6v5.6h-5.6zM440.4 424.8h5.6v5.6h-5.6zM455.1 424.8h5.6v5.6h-5.6zM492.7 421.9h5.6v5.6h-5.6zM505.2 424.8h5.6v5.6h-5.6zM519.6 425.1h5.6v5.6h-5.6zM528.7 425.6h5.6v5.6h-5.6zM513.2 430.4h5.6v5.6h-5.6zM524.9 432.8h5.6v5.6h-5.6zM537.2 430.4h5.6v5.6h-5.6zM542.0 390.7h5.6v5.6h-5.6zM547.6 389.6h5.6v5.6h-5.6zM542.0 396.8h5.6v5.6h-5.6zM540.4 413.1h5.6v5.6h-5.6zM551.1 486.4h5.6v5.6h-5.6zM517.7 494.1h5.6v5.6h-5.6zM543.1 497.1h5.6v5.6h-5.6zM533.5 503.7h5.6v5.6h-5.6zM550.0 505.6h5.6v5.6h-5.6zM519.9 515.2h5.6v5.6h-5.6zM452.9 523.8h5.6v5.6h-5.6zM426.0 528.6h5.6v5.6h-5.6zM431.6 529.4h5.6v5.6h-5.6zM455.9 538.7h5.6v5.6h-5.6zM444.1 549.1h5.6v5.6h-5.6zM466.0 554.2h5.6v5.6h-5.6zM447.6 562.2h5.6v5.6h-5.6zM398.5 562.7h5.6v5.6h-5.6zM426.5 567.0h5.6v5.6h-5.6zM459.6 570.2h5.6v5.6h-5.6zM522.8 568.3h5.6v5.6h-5.6zM481.5 576.9h5.6v5.6h-5.6zM407.1 578.5h5.6v5.6h-5.6zM456.4 578.5h5.6v5.6h-5.6zM462.3 579.0h5.6v5.6h-5.6zM393.5 584.3h5.6v5.6h-5.6zM452.4 581.4h5.6v5.6h-5.6zM425.5 589.4h5.6v5.6h-5.6zM422.3 592.1h5.6v5.6h-5.6zM449.5 587.0h5.6v5.6h-5.6zM472.4 588.3h5.6v5.6h-5.6zM478.8 597.7h5.6v5.6h-5.6zM377.7 599.8h5.6v5.6h-5.6zM406.5 599.5h5.6v5.6h-5.6zM499.6 602.2h5.6v5.6h-5.6zM434.8 604.3h5.6v5.6h-5.6zM440.1 603.5h5.6v5.6h-5.6zM445.7 603.3h5.6v5.6h-5.6zM376.7 607.8h5.6v5.6h-5.6zM404.7 609.4h5.6v5.6h-5.6zM413.7 610.7h5.6v5.6h-5.6zM422.3 615.0h5.6v5.6h-5.6zM435.6 614.2h5.6v5.6h-5.6zM443.6 615.5h5.6v5.6h-5.6zM525.2 533.1h5.6v5.6h-5.6zM536.7 530.2h5.6v5.6h-5.6zM517.2 537.7h5.6v5.6h-5.6zM531.6 538.2h5.6v5.6h-5.6zM524.1 542.7h5.6v5.6h-5.6zM555.6 528.6h5.6v5.6h-5.6zM596.7 272.2h5.6v5.6h-5.6zM592.7 277.0h5.6v5.6h-5.6zM599.1 278.6h5.6v5.6h-5.6zM605.2 286.3h5.6v5.6h-5.6zM595.6 287.9h5.6v5.6h-5.6zM580.4 341.8h5.6v5.6h-5.6zM566.8 352.7h5.6v5.6h-5.6zM558.5 327.1h5.6v5.6h-5.6zM566.8 406.4h5.6v5.6h-5.6zM566.8 412.8h5.6v5.6h-5.6zM559.6 417.6h5.6v5.6h-5.6zM567.6 418.7h5.6v5.6h-5.6zM567.6 424.8h5.6v5.6h-5.6zM562.0 430.4h5.6v5.6h-5.6zM589.2 433.3h5.6v5.6h-5.6zM598.3 433.6h5.6v5.6h-5.6zM606.8 438.7h5.6v5.6h-5.6zM582.5 438.4h5.6v5.6h-5.6zM594.3 440.8h5.6v5.6h-5.6zM575.6 464.3h5.6v5.6h-5.6zM575.6 467.2h5.6v5.6h-5.6zM606.8 473.6h5.6v5.6h-5.6zM607.1 480.3h5.6v5.6h-5.6zM581.5 479.7h5.6v5.6h-5.6zM588.1 478.1h5.6v5.6h-5.6zM571.3 485.3h5.6v5.6h-5.6zM557.2 502.4h5.6v5.6h-5.6zM563.6 502.4h5.6v5.6h-5.6zM578.8 506.7h5.6v5.6h-5.6zM567.9 512.5h5.6v5.6h-5.6zM561.2 520.0h5.6v5.6h-5.6zM561.2 523.0h5.6v5.6h-5.6zM566.3 527.0h5.6v5.6h-5.6zM576.7 528.6h5.6v5.6h-5.6zM592.7 587.5h5.6v5.6h-5.6zM576.4 589.4h5.6v5.6h-5.6zM582.3 591.0h5.6v5.6h-5.6zM585.5 596.3h5.6v5.6h-5.6zM592.1 595.0h5.6v5.6h-5.6zM570.0 601.7h5.6v5.6h-5.6zM588.7 602.2h5.6v5.6h-5.6zM580.7 605.9h5.6v5.6h-5.6zM585.5 608.6h5.6v5.6h-5.6zM570.0 614.2h5.6v5.6h-5.6zM575.1 615.0h5.6v5.6h-5.6zM579.6 614.7h5.6v5.6h-5.6zM595.3 615.2h5.6v5.6h-5.6z" fill="#068ab6" stroke="#78a8c0" stroke-width="0.7"/>
<path d="M369.5 267.1h5.6v5.6h-5.6zM346.5 282.1h5.6v5.6h-5.6zM356.7 283.7h5.6v5.6h-5.6zM366.8 291.1h5.6v5.6h-5.6zM329.5 287.4h5.6v5.6h-5.6zM347.6 289.3h5.6v5.6h-5.6zM328.9 294.9h5.6v5.6h-5.6zM336.9 294.9h5.6v5.6h-5.6zM342.8 307.1h5.6v5.6h-5.6zM418.2 313.5h5.6v5.6h-5.6zM464.4 267.1h5.6v5.6h-5.6zM446.5 299.1h5.6v5.6h-5.6zM507.9 265.8h5.6v5.6h-5.6zM494.5 277.5h5.6v5.6h-5.6zM482.0 286.1h5.6v5.6h-5.6zM492.7 287.4h5.6v5.6h-5.6zM490.3 304.2h5.6v5.6h-5.6zM475.6 313.8h5.6v5.6h-5.6zM488.7 315.7h5.6v5.6h-5.6zM430.8 305.8h5.6v5.6h-5.6zM463.9 312.5h5.6v5.6h-5.6zM436.4 317.8h5.6v5.6h-5.6zM452.9 318.6h5.6v5.6h-5.6zM445.2 321.5h5.6v5.6h-5.6zM468.4 331.1h5.6v5.6h-5.6zM450.0 331.7h5.6v5.6h-5.6zM410.5 334.6h5.6v5.6h-5.6zM430.5 336.5h5.6v5.6h-5.6zM446.5 337.8h5.6v5.6h-5.6zM381.2 351.7h5.6v5.6h-5.6zM405.2 353.3h5.6v5.6h-5.6zM416.1 353.5h5.6v5.6h-5.6zM427.6 353.8h5.6v5.6h-5.6zM387.3 365.5h5.6v5.6h-5.6zM399.6 370.1h5.6v5.6h-5.6zM409.7 366.3h5.6v5.6h-5.6zM419.6 369.8h5.6v5.6h-5.6zM430.0 374.9h5.6v5.6h-5.6zM440.4 375.7h5.6v5.6h-5.6zM444.7 350.3h5.6v5.6h-5.6zM405.2 381.5h5.6v5.6h-5.6zM414.3 385.8h5.6v5.6h-5.6zM376.9 382.3h5.6v5.6h-5.6zM381.7 382.6h5.6v5.6h-5.6zM393.5 385.5h5.6v5.6h-5.6zM330.0 376.5h5.6v5.6h-5.6zM482.5 355.1h5.6v5.6h-5.6zM463.1 353.3h5.6v5.6h-5.6zM458.0 353.3h5.6v5.6h-5.6zM463.1 335.4h5.6v5.6h-5.6zM533.2 324.2h5.6v5.6h-5.6zM531.6 338.6h5.6v5.6h-5.6zM551.6 363.1h5.6v5.6h-5.6zM499.6 382.6h5.6v5.6h-5.6zM510.0 383.9h5.6v5.6h-5.6zM471.6 380.2h5.6v5.6h-5.6zM479.6 381.5h5.6v5.6h-5.6zM390.0 394.9h5.6v5.6h-5.6zM401.5 396.5h5.6v5.6h-5.6zM395.1 402.7h5.6v5.6h-5.6zM410.8 404.5h5.6v5.6h-5.6zM389.2 408.0h5.6v5.6h-5.6zM399.6 409.6h5.6v5.6h-5.6zM376.4 413.6h5.6v5.6h-5.6zM418.3 413.3h5.6v5.6h-5.6zM428.7 414.7h5.6v5.6h-5.6zM408.4 421.1h5.6v5.6h-5.6zM407.3 428.3h5.6v5.6h-5.6zM342.8 436.5h5.6v5.6h-5.6zM365.7 438.4h5.6v5.6h-5.6zM374.3 439.2h5.6v5.6h-5.6zM401.5 439.2h5.6v5.6h-5.6zM350.8 445.6h5.6v5.6h-5.6zM364.9 446.7h5.6v5.6h-5.6zM373.2 449.3h5.6v5.6h-5.6zM394.5 452.0h5.6v5.6h-5.6zM355.9 459.2h5.6v5.6h-5.6zM454.5 452.8h5.6v5.6h-5.6zM403.1 459.7h5.6v5.6h-5.6zM418.3 459.2h5.6v5.6h-5.6zM438.8 464.5h5.6v5.6h-5.6zM483.6 466.9h5.6v5.6h-5.6zM485.5 481.6h5.6v5.6h-5.6zM462.3 486.7h5.6v5.6h-5.6zM335.6 485.3h5.6v5.6h-5.6zM390.8 486.7h5.6v5.6h-5.6zM437.5 490.4h5.6v5.6h-5.6zM382.8 493.6h5.6v5.6h-5.6zM401.2 491.2h5.6v5.6h-5.6zM405.7 496.0h5.6v5.6h-5.6zM417.7 495.7h5.6v5.6h-5.6zM436.4 496.0h5.6v5.6h-5.6zM330.0 496.8h5.6v5.6h-5.6zM341.2 499.5h5.6v5.6h-5.6zM382.5 507.2h5.6v5.6h-5.6zM398.8 509.9h5.6v5.6h-5.6zM415.3 519.2h5.6v5.6h-5.6zM473.7 504.8h5.6v5.6h-5.6zM471.6 391.5h5.6v5.6h-5.6zM479.6 392.0h5.6v5.6h-5.6zM499.9 398.4h5.6v5.6h-5.6zM467.9 417.6h5.6v5.6h-5.6zM443.6 424.8h5.6v5.6h-5.6zM467.1 427.2h5.6v5.6h-5.6zM474.0 428.3h5.6v5.6h-5.6zM487.9 421.3h5.6v5.6h-5.6zM498.0 422.7h5.6v5.6h-5.6zM537.7 425.9h5.6v5.6h-5.6zM513.2 433.3h5.6v5.6h-5.6zM536.7 435.2h5.6v5.6h-5.6zM541.7 401.3h5.6v5.6h-5.6zM545.2 505.3h5.6v5.6h-5.6zM424.4 523.8h5.6v5.6h-5.6zM453.5 533.4h5.6v5.6h-5.6zM435.6 538.2h5.6v5.6h-5.6zM458.8 543.8h5.6v5.6h-5.6zM453.2 561.1h5.6v5.6h-5.6zM444.7 565.7h5.6v5.6h-5.6zM473.5 565.1h5.6v5.6h-5.6zM408.7 568.6h5.6v5.6h-5.6zM467.1 579.8h5.6v5.6h-5.6zM407.6 590.2h5.6v5.6h-5.6zM447.1 591.0h5.6v5.6h-5.6zM442.0 592.6h5.6v5.6h-5.6zM436.4 594.7h5.6v5.6h-5.6zM489.7 588.3h5.6v5.6h-5.6zM489.7 600.6h5.6v5.6h-5.6zM422.3 612.6h5.6v5.6h-5.6zM432.4 613.9h5.6v5.6h-5.6zM439.6 614.7h5.6v5.6h-5.6zM470.3 611.8h5.6v5.6h-5.6zM508.9 615.5h5.6v5.6h-5.6zM554.5 603.0h5.6v5.6h-5.6zM494.5 538.5h5.6v5.6h-5.6zM518.3 528.3h5.6v5.6h-5.6zM532.4 533.4h5.6v5.6h-5.6zM516.7 542.5h5.6v5.6h-5.6zM531.6 543.8h5.6v5.6h-5.6zM555.6 533.1h5.6v5.6h-5.6zM588.7 280.7h5.6v5.6h-5.6zM604.4 280.7h5.6v5.6h-5.6zM600.1 290.6h5.6v5.6h-5.6zM581.5 329.8h5.6v5.6h-5.6zM578.8 354.1h5.6v5.6h-5.6zM722.8 292.7h5.6v5.6h-5.6zM646.8 344.5h5.6v5.6h-5.6zM712.7 352.5h5.6v5.6h-5.6zM569.5 406.7h5.6v5.6h-5.6zM567.6 430.7h5.6v5.6h-5.6zM557.2 429.6h5.6v5.6h-5.6zM607.3 434.1h5.6v5.6h-5.6zM582.8 441.1h5.6v5.6h-5.6zM606.5 443.5h5.6v5.6h-5.6zM634.8 460.3h5.6v5.6h-5.6zM580.7 486.7h5.6v5.6h-5.6zM561.7 484.0h5.6v5.6h-5.6zM669.5 473.6h5.6v5.6h-5.6zM569.5 503.2h5.6v5.6h-5.6zM567.1 520.8h5.6v5.6h-5.6zM567.1 523.0h5.6v5.6h-5.6zM604.7 553.7h5.6v5.6h-5.6zM661.5 562.7h5.6v5.6h-5.6zM724.7 561.7h5.6v5.6h-5.6zM782.3 568.6h5.6v5.6h-5.6zM572.4 571.5h5.6v5.6h-5.6zM580.7 599.8h5.6v5.6h-5.6zM592.7 602.7h5.6v5.6h-5.6zM583.6 601.4h5.6v5.6h-5.6zM569.2 612.6h5.6v5.6h-5.6zM584.7 614.7h5.6v5.6h-5.6zM848.7 321.3h5.6v5.6h-5.6zM859.9 402.9h5.6v5.6h-5.6zM841.7 490.9h5.6v5.6h-5.6zM888.7 493.6h5.6v5.6h-5.6zM840.7 570.2h5.6v5.6h-5.6zM881.7 553.7h5.6v5.6h-5.6z" fill="#0404ae" stroke="#7878bc" stroke-width="0.7"/>
<path d="M357.7 267.1h5.6v5.6h-5.6zM343.9 296.5h5.6v5.6h-5.6zM330.0 305.0h5.6v5.6h-5.6zM482.3 267.1h5.6v5.6h-5.6zM493.7 267.1h5.6v5.6h-5.6zM480.9 277.0h5.6v5.6h-5.6zM395.3 343.6h5.6v5.6h-5.6zM433.5 343.6h5.6v5.6h-5.6zM330.0 385.8h5.6v5.6h-5.6zM458.8 334.6h5.6v5.6h-5.6zM458.8 338.6h5.6v5.6h-5.6zM458.8 342.1h5.6v5.6h-5.6zM458.8 345.5h5.6v5.6h-5.6zM458.8 349.0h5.6v5.6h-5.6zM514.5 358.6h5.6v5.6h-5.6zM345.7 404.3h5.6v5.6h-5.6zM345.7 411.2h5.6v5.6h-5.6zM351.6 437.6h5.6v5.6h-5.6zM330.0 484.8h5.6v5.6h-5.6zM330.0 487.2h5.6v5.6h-5.6zM401.5 488.0h5.6v5.6h-5.6zM422.0 502.1h5.6v5.6h-5.6zM457.2 513.9h5.6v5.6h-5.6zM491.6 398.1h5.6v5.6h-5.6zM443.6 417.3h5.6v5.6h-5.6zM513.7 425.6h5.6v5.6h-5.6zM540.4 489.1h5.6v5.6h-5.6zM550.0 501.1h5.6v5.6h-5.6zM521.2 502.4h5.6v5.6h-5.6zM408.7 586.7h5.6v5.6h-5.6zM374.8 615.8h5.6v5.6h-5.6zM398.8 615.8h5.6v5.6h-5.6zM403.6 615.8h5.6v5.6h-5.6zM491.6 615.5h5.6v5.6h-5.6zM518.0 533.1h5.6v5.6h-5.6zM597.2 267.1h5.6v5.6h-5.6zM594.8 282.3h5.6v5.6h-5.6zM561.2 405.9h5.6v5.6h-5.6zM583.3 433.6h5.6v5.6h-5.6zM570.3 591.8h5.6v5.6h-5.6zM605.7 615.8h5.6v5.6h-5.6z" fill="#c6062c" stroke="#c08a9c" stroke-width="0.7"/>
</svg></div>
<div id="rightdock" class="abs">
<style>
.dtitle{position:absolute;left:0;width:299px;height:22px;font-size:11.700px;line-height:22px;color:#222;}
.dtitle span{position:absolute;left:0;width:333px;text-align:center;}
.lbtn{position:absolute;top:22px;height:26px;box-sizing:border-box;border:1px solid #adadad;background:linear-gradient(#fafafa,#e3e3e3 55%,#f1f1f1);}
.lrow{position:absolute;left:1px;width:297px;height:20px;font-size:13.300px;line-height:20px;color:#111;}
.lrow span{position:absolute;left:47px;top:0.700px;white-space:nowrap}
.flab{position:absolute;left:27px;margin-top:0.800px;font-size:13.400px;line-height:18px;color:#111;white-space:nowrap}
.combo{position:absolute;left:122px;width:150px;height:21px;margin-top:-1.200px;box-sizing:border-box;border:1px solid #d0d0d0;border-radius:5px;background:#fff;font-size:13.300px;line-height:18px;color:#111;box-shadow:0 0.500px 1px rgba(0,0,0,0.25);}
.combo span{position:absolute;left:3px;top:2.300px;white-space:nowrap}
.combo i{position:absolute;right:1.500px;top:1.700px;width:16px;height:16px;border-radius:4px;background:linear-gradient(#2a82ff,#0a68f8);}
.fbtn{position:absolute;top:622px;height:26px;box-sizing:border-box;border:1px solid #b4b4b4;background:linear-gradient(#fafafa,#e3e3e3 55%,#f1f1f1);}
</style>
<svg width="0" height="0" style="position:absolute"><defs>
<g id="dclose"><circle cx="0" cy="0" r="6.900" fill="#5a5a5a"/><path d="M-2.700 -2.700 L2.700 2.700 M2.700 -2.700 L-2.700 2.700" stroke="#ececec" stroke-width="2"/></g>
<g id="dfloat"><circle cx="0" cy="0" r="6.900" fill="#5a5a5a"/><rect x="-1.500" y="-3.200" width="5" height="4" fill="none" stroke="#ececec" stroke-width="1.100"/><rect x="-3.500" y="-1" width="5" height="4" fill="#5a5a5a" stroke="#ececec" stroke-width="1.100"/></g>
<g id="eye"><path d="M-7.500 0.500 C-4.500 -4 4.500 -4 7.500 0.500 C4.500 5 -4.500 5 -7.500 0.500z" fill="#fff" stroke="currentColor" stroke-width="1.800"/><circle cx="0" cy="0.500" r="3.300" fill="currentColor"/><circle cx="-1.200" cy="-0.600" r="1" fill="#fff"/></g>
<g id="lock"><path d="M-3 0 v-3.500 a3 3 0 0 1 6 0 v3.500" fill="none" stroke="#b5b5b5" stroke-width="1.400"/><rect x="-5" y="-0.500" width="10" height="7.500" fill="#b5b5b5"/></g>
<g id="pencil"><path d="M-7 7 l1.800 -4.800 l10.500 -10.500 l3 3 l-10.500 10.500z" fill="#e9a030" stroke="#b87818" stroke-width="0.500"/><path d="M-7 7 l1.800 -4.800 l3 3z" fill="#f1d7a8"/><path d="M-7 7 l0.700 -1.900 l1.200 1.200z" fill="#333"/><path d="M4.300 -7.300 l1 -1 l3 3 l-1 1z" fill="#e33"/></g>
<g id="stepper"><path d="M-3 -1.700 L0 -4.700 L3 -1.700 M-3 1.700 L0 4.700 L3 1.700" fill="none" stroke="#fff" stroke-width="1.500" stroke-linecap="round" stroke-linejoin="round"/></g>
</defs></svg>
<div class="dtitle" style="top:0"><span>Lista de capas</span></div>
<svg class="abs" style="left:0;top:0" width="60" height="22"><use href="#dclose" x="9" y="10"/><use href="#dfloat" x="27" y="10"/></svg>
<div class="lbtn" style="left:0.500px;width:60px"></div><div class="lbtn" style="left:60.500px;width:60px"></div><div class="lbtn" style="left:120.500px;width:60px"></div><div class="lbtn" style="left:180.500px;width:60px"></div><div class="lbtn" style="left:240.500px;width:58px"></div>
<svg class="abs" style="left:0;top:22px" width="299" height="26"><use href="#eye" x="30" y="12.500" color="#000"/><use href="#eye" x="90" y="12.500" color="#a8a8a8"/><path d="M143.500 13 h12 M149.500 7 v12" stroke="#e00010" stroke-width="2.600"/><path d="M204 13 h11" stroke="#e00010" stroke-width="2.600"/><use href="#pencil" x="269.500" y="13.500"/></svg>
<div class="abs" style="left:0;top:48px;width:299px;height:388px;background:#fff;border:1px solid #c8c8c8;box-sizing:border-box"></div>
<div class="lrow" style="top:49px"><span>0</span></div>
<div class="lrow" style="top:69px;background:#0a4ad8;color:#fff"><span>Números catastrales</span></div>
<div class="lrow" style="top:89px"><span>Texto</span></div>
<svg class="abs" style="left:0;top:48.800px" width="299" height="62"><rect x="26.500" y="6.500" width="15" height="8" fill="#fff" stroke="#000"/><rect x="26" y="26" width="16" height="9" fill="#3b4250"/><rect x="26" y="46" width="16" height="9" fill="#000"/>
<use href="#eye" x="267" y="11" color="#000"/><use href="#eye" x="267" y="31" color="#000"/><use href="#eye" x="267" y="51" color="#000"/>
<use href="#lock" x="289.500" y="10.500"/><use href="#lock" x="289.500" y="30.500"/><use href="#lock" x="289.500" y="50.500"/>
<g transform="translate(246,31.500) scale(0.78)"><use href="#pencil"/></g></svg>
<div class="dtitle" style="top:436px"><span>Filtro de selección</span></div>
<svg class="abs" style="left:0;top:436px" width="60" height="22"><use href="#dclose" x="9" y="10"/><use href="#dfloat" x="27" y="10"/></svg>
<div class="abs" style="left:0;top:456.800px;width:299px;height:1.300px;background:#d2d2d2"></div>
<div class="abs" style="left:12px;top:471px;width:276px;height:136px;background:#e7e7e7;border:1px solid #e3e3e3;border-radius:2px;box-sizing:border-box"></div>
<div class="abs" style="left:19.200px;top:461.300px;font-size:11.500px;line-height:14px;color:#222">Filtro</div>
<div class="flab" style="top:493px">Tipo:</div><div class="flab" style="top:519px">Característica:</div><div class="flab" style="top:545px">Comparación:</div><div class="flab" style="top:571px">Valor:</div>
<div class="combo" style="top:492px"><span>Texto [11]</span><i></i></div>
<div class="combo" style="top:518px"><span>Color</span><i></i></div>
<div class="combo" style="top:544px"><span>= (es)</span><i></i></div>
<div class="combo" style="top:570px"><span style="left:25px">Amarillo</span><i></i><b style="position:absolute;left:4px;top:6px;width:15px;height:9px;background:#ffff00;border:1px solid #222;box-sizing:border-box"></b></div>
<svg class="abs" style="left:123px;top:491.500px" width="150" height="100"><use href="#stepper" x="139.500" y="10"/><use href="#stepper" x="139.500" y="36"/><use href="#stepper" x="139.500" y="62"/><use href="#stepper" x="139.500" y="88"/></svg>
<div class="fbtn" style="left:12px;width:69px"></div><div class="fbtn" style="left:80px;width:71px;background:linear-gradient(#f5cdd0,#eeb4b8 55%,#f3c6c9);border-color:#e4585f"></div><div class="fbtn" style="left:150px;width:70px"></div><div class="fbtn" style="left:219px;width:69px"></div>
<svg class="abs" style="left:0;top:600px" width="299" height="76" viewBox="1155 723 299 76">
<defs><linearGradient id="gfh" x1="0" y1="0" x2="1" y2="0"><stop offset="0" stop-color="#ee4a52" stop-opacity="0"/><stop offset="0.120" stop-color="#ee4a52" stop-opacity="0.900"/><stop offset="0.880" stop-color="#ee4a52" stop-opacity="0.900"/><stop offset="1" stop-color="#ee4a52" stop-opacity="0"/></linearGradient>
<linearGradient id="gfv" x1="0" y1="0" x2="0" y2="1"><stop offset="0" stop-color="#ee4a52" stop-opacity="0"/><stop offset="0.200" stop-color="#ee4a52" stop-opacity="0.900"/><stop offset="0.800" stop-color="#ee4a52" stop-opacity="0.900"/><stop offset="1" stop-color="#ee4a52" stop-opacity="0"/></linearGradient></defs>
<rect x="1227" y="745.700" width="87" height="1.300" fill="url(#gfh)"/><rect x="1227" y="769.700" width="87" height="1.300" fill="url(#gfh)"/>
<rect x="1235" y="736" width="1.300" height="44" fill="url(#gfv)"/><rect x="1304.400" y="736" width="1.300" height="44" fill="url(#gfv)"/>
<rect x="1194.500" y="751.500" width="12.500" height="12" fill="#ff8f94" stroke="#7a3a3e" stroke-width="0.800" stroke-dasharray="1.300 1"/>
<rect x="1263.500" y="751.500" width="10.500" height="10" fill="#f8676c" stroke="#c23a42" stroke-width="0.900"/><rect x="1266.700" y="755" width="10.300" height="9.500" fill="#f8676c" fill-opacity="0.850" stroke="#8a2a30" stroke-width="0.800" stroke-dasharray="1.300 1"/>
<rect x="1332.500" y="751.500" width="10.300" height="10" fill="#ff8f94" stroke="#c8525a" stroke-width="0.900"/><rect x="1336.200" y="755" width="10" height="9.500" fill="#fff" stroke="#444" stroke-width="0.800" stroke-dasharray="1.300 1"/>
<rect x="1401.500" y="751.500" width="10.300" height="10" fill="#fff" stroke="#8a8a8a" stroke-width="0.900"/><rect x="1404.600" y="755" width="7" height="6.400" fill="#ff8088"/><rect x="1404.600" y="755" width="10.300" height="9.500" fill="none" stroke="#444" stroke-width="0.800" stroke-dasharray="1.300 1"/>
</svg>
</div>
<div id="righttb" class="abs">
<div class="hgrip" style="left:7px;top:9px;width:27px;background:repeating-linear-gradient(90deg,#a2a2a2 0,#a2a2a2 2px,transparent 2px,transparent 6.100px)"></div>
<div class="sel" style="left:1px;top:13px;width:46px;height:43px;border-radius:5px;background:#b8b8b8"></div>
<div class="sel" style="left:1px;top:209px;width:46px;height:42px;border-radius:5px;background:#b8b8b8"></div>
<div class="sel" style="left:1px;top:311px;width:46px;height:43px;border-radius:5px;background:#b8b8b8"></div>
<div class="abs" style="left:2px;top:154px;width:43px;height:0;border-top:1px dotted #666"></div>
<div class="abs" style="left:2px;top:303px;width:43px;height:0;border-top:1px dotted #666"></div>
<div class="abs" style="left:2px;top:406px;width:43px;height:0;border-top:1px dotted #666"></div>
<svg class="abs" style="left:0;top:0" width="45" height="677" viewBox="1455 122 45 677">
<defs><g id="win"><rect x="0.500" y="0.500" width="27" height="27" fill="#fff" stroke="#555" stroke-width="0.800"/><rect x="0" y="0" width="28" height="4.500" fill="#000"/><rect x="0.800" y="0.800" width="2.800" height="2.800" fill="#fff"/></g></defs>
<use href="#win" x="1463" y="142"/>
<path d="M1470 155 l5 -3 v10 l-5 3z M1472 154 l5 -3 v10 l-5 3z" fill="#999" stroke="#555" stroke-width="0.600"/><path d="M1475 153 l8 -4 v11 l-8 4z" fill="#f4f4f4" stroke="#666" stroke-width="0.600"/><path d="M1478 159 l3 -5 v5z" fill="none" stroke="#e22" stroke-width="0.700"/>
<use href="#win" x="1463" y="189.500"/>
<rect x="1470.500" y="200.500" width="9" height="7" fill="#fdf0c0" stroke="#444" stroke-width="0.700"/><circle cx="1479" cy="207.500" r="4" fill="#fdf0c0" stroke="#444" stroke-width="0.700"/>
<use href="#win" x="1463" y="235.500"/>
<rect x="1469.500" y="246.500" width="16" height="10" rx="2" fill="#f4f4f4" stroke="#b8c8e4" stroke-width="1"/>
<use href="#win" x="1463" y="291.500"/>
<g fill="#111"><rect x="1466.500" y="299.500" width="3.500" height="3"/><rect x="1466.500" y="305.500" width="3.500" height="3"/><rect x="1466.500" y="311.500" width="3.500" height="3"/></g>
<g fill="#fff" stroke="#444" stroke-width="0.700"><rect x="1473.500" y="299.500" width="14" height="3"/><rect x="1473.500" y="305.500" width="14" height="3"/><rect x="1473.500" y="311.500" width="14" height="3"/></g>
<use href="#win" x="1463.500" y="337"/>
<path d="M1469 346 h17 l-6.500 7 v8.500 l-4 -2 v-6.500z" fill="#aaa" stroke="#555" stroke-width="0.700"/><ellipse cx="1477.500" cy="346" rx="8.500" ry="1.800" fill="#d8d8d8" stroke="#555" stroke-width="0.700"/>
<use href="#win" x="1463.500" y="384"/>
<path d="M1469 393 l4 2 v7 l-4 2z" fill="#fff" stroke="#444" stroke-width="0.700"/><rect x="1473" y="395" width="11" height="7" rx="1" fill="#8a8a8a" stroke="#444" stroke-width="0.600"/><path d="M1467 398.500 h20" stroke="#e88" stroke-width="0.500" stroke-dasharray="2 1"/>
<use href="#win" x="1463.500" y="440"/>
<path d="M1466 448 h12 M1466 451 h10 M1466 454 h13 M1466 457 h12" stroke="#888" stroke-width="0.800"/><path d="M1464 463.500 h27" stroke="#444" stroke-width="0.600"/><path d="M1466 466 h3 M1472 466 h16" stroke="#444" stroke-width="1"/>
<use href="#win" x="1463.500" y="487"/>
<rect x="1471" y="496.500" width="13" height="15" rx="1" fill="#c08030" stroke="#8f5a1a" stroke-width="0.600"/><rect x="1472.500" y="498.500" width="10" height="11.500" fill="#f1f1ef"/><rect x="1474.500" y="495" width="6" height="3" fill="#999"/>
<text x="1477.500" y="566" font-size="24" text-anchor="middle" font-family="Liberation Sans, sans-serif" fill="#111" stroke="#dcdcdc" stroke-width="0.700" textLength="27" lengthAdjust="spacingAndGlyphs">3D</text>
</svg>
</div>
<div id="status" class="abs">
<div style="left:2px;top:8px">384.7061,91.9092</div>
<div style="left:2px;top:28px">@384.7061,91.9092</div>
<div style="left:253px;top:3px;width:0;height:37px;border-left:1px solid #9a9a9a"></div>
<div style="left:256px;top:8px">395.5327&lt;13°</div>
<div style="left:256px;top:28px">@395.5327&lt;13°</div>
<div style="left:507px;top:20px;width:5px;height:5px;border-radius:50%;background:#cfcfcf"></div>
<div style="left:940px;top:20px;width:5px;height:5px;border-radius:50%;background:#cfcfcf"></div>
<div style="left:1270px;top:20px;width:5px;height:5px;border-radius:50%;background:#cfcfcf"></div>
<div style="left:498px;top:12px;width:200px;text-align:right">Seleccionar entidad o región</div>
<div style="left:498px;top:23px;width:200px;text-align:right">Mover entidad o referencia</div>
<svg style="position:absolute;left:716px;top:5px" width="22" height="34" viewBox="0 0 22 34"><rect x="2.500" y="2" width="16" height="28" rx="8" fill="#fff" stroke="#333" stroke-width="1"/><path d="M2.500 14 h16 M10.500 2 v12" stroke="#333" stroke-width="0.800" fill="none"/><rect x="9" y="5" width="3" height="6" rx="1.500" fill="#fff" stroke="#333" stroke-width="0.800"/></svg>
<div style="left:949px;top:12px">Las entidades seleccionadas:</div>
<div style="left:949px;top:23px">155 entidades en 3 capas.</div>
</div>
<svg class="abs" style="left:1235px;top:715px" width="104" height="100" viewBox="1235 715 104 100">
<circle cx="1287" cy="763.600" r="36.500" fill="#c9d6e6" fill-opacity="0.140" stroke="#9ab0c6" stroke-opacity="0.600" stroke-width="5"/>
<circle cx="1287" cy="763.600" r="36.500" fill="none" stroke="#8aa2bc" stroke-opacity="0.350" stroke-width="2.500"/>
<path d="M1287.400 764.200 L1287.400 785.400 L1292.200 781 L1296 790.400 L1299.600 788.800 L1295.800 779.800 L1302.400 779.400 Z" fill="#fff" stroke="#000" stroke-width="1.300" stroke-linejoin="round"/>
</svg>
</body>
</html>
